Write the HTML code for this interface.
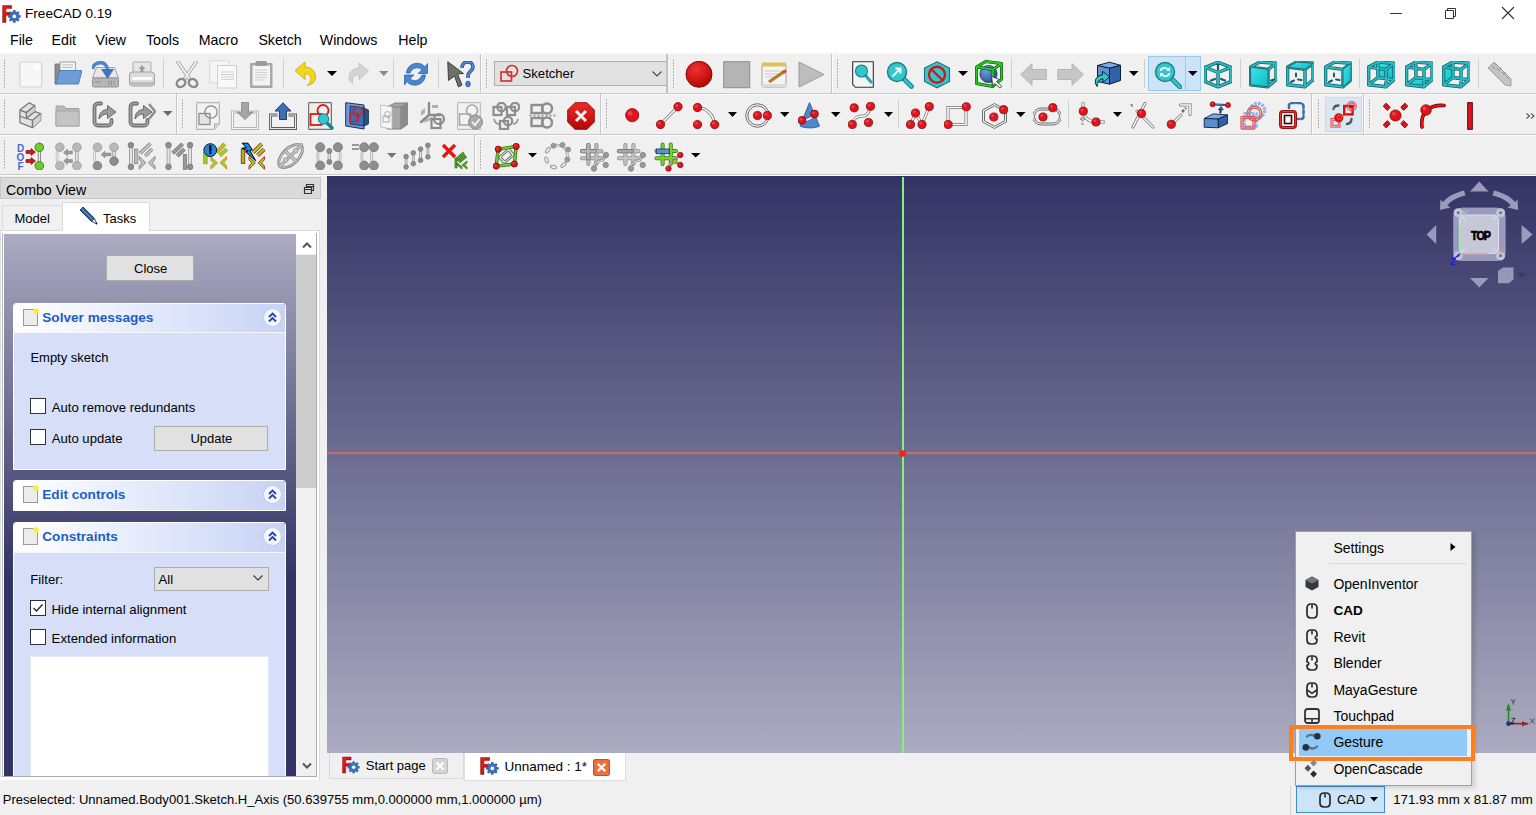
<!DOCTYPE html><html><head><meta charset="utf-8"><style>
html,body{margin:0;padding:0;}
body{width:1536px;height:815px;position:relative;overflow:hidden;background:#f0f0f0;font-family:"Liberation Sans",sans-serif;}
div,span,svg{position:absolute;box-sizing:border-box;}
.t{white-space:nowrap;line-height:1;}
</style></head><body>
<div style="left:0px;top:0px;width:1536px;height:53px;background:#fff"></div>
<div style="left:0px;top:53px;width:1536px;height:2px;background:linear-gradient(#f7f7f7,#f0f0f0)"></div>
<svg style="left:2px;top:5px;width:19px;height:18px" viewBox="0 0 19 18"><defs><linearGradient id="lgF" x1="0" y1="0" x2="1" y2="1"><stop offset="0" stop-color="#f02020"/><stop offset="1" stop-color="#b00808"/></linearGradient></defs><path d="M0.6 0.6H9.6V3.6H3.9V7.3H8.2V10.3H3.9V17.4H0.6Z" fill="url(#lgF)" stroke="#7a0a0e" stroke-width="0.5"/><g transform="translate(12.3,11.4)"><rect x="-1.3" y="-6.4" width="2.6" height="3.2" fill="#3f72bf" transform="rotate(0)"/><rect x="-1.3" y="-6.4" width="2.6" height="3.2" fill="#3f72bf" transform="rotate(45)"/><rect x="-1.3" y="-6.4" width="2.6" height="3.2" fill="#3f72bf" transform="rotate(90)"/><rect x="-1.3" y="-6.4" width="2.6" height="3.2" fill="#3f72bf" transform="rotate(135)"/><rect x="-1.3" y="-6.4" width="2.6" height="3.2" fill="#3f72bf" transform="rotate(180)"/><rect x="-1.3" y="-6.4" width="2.6" height="3.2" fill="#3f72bf" transform="rotate(225)"/><rect x="-1.3" y="-6.4" width="2.6" height="3.2" fill="#3f72bf" transform="rotate(270)"/><rect x="-1.3" y="-6.4" width="2.6" height="3.2" fill="#3f72bf" transform="rotate(315)"/><circle r="4.6" fill="#3f72bf" stroke="#2a4f8a" stroke-width="0.5"/><circle r="1.8" fill="#fff"/></g></svg>
<span class="t" style="left:25px;top:6.50px;font-size:13.6px;color:#000;font-weight:normal;">FreeCAD 0.19</span>
<div style="left:1390px;top:13px;width:12px;height:1px;background:#333"></div>
<svg style="left:1444px;top:6px;width:15px;height:14px" viewBox="0 0 15 14"><path d="M1.5 4.5h8v8h-8z M3.5 4.5v-2h8v8h-2" fill="none" stroke="#333" stroke-width="1"/></svg>
<svg style="left:1501px;top:6px;width:15px;height:14px" viewBox="0 0 15 14"><path d="M1 1L13 13M13 1L1 13" stroke="#333" stroke-width="1.1"/></svg>
<span class="t" style="left:10px;top:33.29px;font-size:14.2px;color:#000;font-weight:normal;">File</span>
<span class="t" style="left:51.6px;top:33.29px;font-size:14.2px;color:#000;font-weight:normal;">Edit</span>
<span class="t" style="left:95.6px;top:33.29px;font-size:14.2px;color:#000;font-weight:normal;">View</span>
<span class="t" style="left:146px;top:33.29px;font-size:14.2px;color:#000;font-weight:normal;">Tools</span>
<span class="t" style="left:198.8px;top:33.29px;font-size:14.2px;color:#000;font-weight:normal;">Macro</span>
<span class="t" style="left:258.4px;top:33.29px;font-size:14.2px;color:#000;font-weight:normal;">Sketch</span>
<span class="t" style="left:319.8px;top:33.29px;font-size:14.2px;color:#000;font-weight:normal;">Windows</span>
<span class="t" style="left:398.3px;top:33.29px;font-size:14.2px;color:#000;font-weight:normal;">Help</span>
<div style="left:0px;top:93px;width:1536px;height:1px;background:#cacaca"></div>
<div style="left:0px;top:94px;width:1536px;height:1px;background:#fbfbfb"></div>
<div style="left:0px;top:134px;width:1536px;height:1px;background:#cacaca"></div>
<div style="left:0px;top:135px;width:1536px;height:1px;background:#fbfbfb"></div>
<div style="left:0px;top:174px;width:1536px;height:1px;background:#cacaca"></div>
<div style="left:0px;top:175px;width:1536px;height:1px;background:#fbfbfb"></div>
<div style="left:4px;top:59px;width:1px;height:30px;background:repeating-linear-gradient(#b0b0b0 0 2px,transparent 2px 3px)"></div>
<div style="left:5px;top:60px;width:1px;height:30px;background:repeating-linear-gradient(#fafafa 0 1px,transparent 1px 3px)"></div>
<div style="left:4px;top:99px;width:1px;height:30px;background:repeating-linear-gradient(#b0b0b0 0 2px,transparent 2px 3px)"></div>
<div style="left:5px;top:100px;width:1px;height:30px;background:repeating-linear-gradient(#fafafa 0 1px,transparent 1px 3px)"></div>
<div style="left:4px;top:140px;width:1px;height:30px;background:repeating-linear-gradient(#b0b0b0 0 2px,transparent 2px 3px)"></div>
<div style="left:5px;top:141px;width:1px;height:30px;background:repeating-linear-gradient(#fafafa 0 1px,transparent 1px 3px)"></div>
<svg style="left:19px;top:61px;width:28px;height:28px" viewBox="0 0 28 28"><rect x="0.8" y="1" width="22" height="25" rx="2" fill="#f7f7f7" stroke="#d2d2d2" stroke-width="1.2"/><circle cx="18" cy="6" r="2.5" fill="#fff"/></svg>
<svg style="left:53.5px;top:61px;width:28px;height:28px" viewBox="0 0 28 28"><path d="M1 3H7V22L3 23H1Z" fill="#8c8c8c" stroke="#6e6e6e" stroke-width="0.8"/><path d="M6 1H21.5V10H6Z" fill="#f4f4f4" stroke="#8a8a8a" stroke-width="0.8"/><path d="M8 4H19M8 6.5H19" stroke="#bdbdbd" stroke-width="1"/><path d="M5.5 9.5H28L24.5 23H1.5Z" fill="#6d9cd8" stroke="#4a78b8" stroke-width="0.9"/></svg>
<svg style="left:91.5px;top:61px;width:28px;height:28px" viewBox="0 0 28 28"><path d="M4.5 6.5H22.5L26.5 17H0.5Z" fill="#e8e8e8" stroke="#9a9a9a" stroke-width="0.9"/><rect x="0.5" y="17" width="26" height="9" rx="1.5" fill="#b6b6b6" stroke="#8a8a8a" stroke-width="0.9"/><path d="M3 21H9M17 19.5V24M19.5 19.5V24M22 19.5V24" stroke="#8a8a8a" stroke-width="0.9"/><path d="M0.5 8C2 0 14 -1 15.5 8" fill="none" stroke="#4d84cc" stroke-width="3.6"/><path d="M9 8H22L15.5 18Z" fill="#3f74c0"/></svg>
<svg style="left:129px;top:61px;width:28px;height:28px" viewBox="0 0 28 28"><rect x="4" y="1" width="18" height="13" rx="1" fill="#e6e6e6" stroke="#a6a6a6" stroke-width="0.9"/><path d="M13 4L9.5 8H11.5V12H14.5V8H16.5Z" fill="#9c9c9c"/><rect x="0.5" y="11" width="25" height="14" rx="3" fill="#dcdcdc" stroke="#9a9a9a" stroke-width="0.9"/><rect x="3" y="16" width="20" height="3" fill="#fbfbfb"/><rect x="0.5" y="21" width="25" height="4" rx="1" fill="#bcbcbc"/></svg>
<div style="left:163px;top:59px;width:1px;height:29px;background:#cfcfcf"></div>
<svg style="left:174.5px;top:60.5px;width:28px;height:28px" viewBox="0 0 28 28"><path d="M3 1L14.5 18M21 1L9.5 18" stroke="#9a9a9a" stroke-width="3.4" stroke-linecap="round"/><path d="M3 1L14.5 18M21 1L9.5 18" stroke="#f2f2f2" stroke-width="2" stroke-linecap="round"/><ellipse cx="6" cy="22" rx="4.5" ry="3.8" transform="rotate(-40 6 22)" fill="none" stroke="#8a8a8a" stroke-width="2.4"/><ellipse cx="18" cy="22" rx="4.5" ry="3.8" transform="rotate(40 18 22)" fill="none" stroke="#8a8a8a" stroke-width="2.4"/></svg>
<svg style="left:209px;top:60px;width:28px;height:29px" viewBox="0 0 28 29"><rect x="0.8" y="0.8" width="19" height="22" fill="#f6f6f6" stroke="#d8d8d8" stroke-width="1"/><path d="M8.5 5.5H27.5V28H8.5Z" fill="#f8f8f8" stroke="#cfcfcf" stroke-width="1"/><path d="M12 12H25M12 14.5H25M12 17H25M12 19.5H25" stroke="#d0d0d0" stroke-width="1"/></svg>
<svg style="left:249px;top:60px;width:28px;height:28px" viewBox="0 0 28 28"><rect x="1" y="3" width="22.5" height="25" rx="1" fill="#a9a9a9"/><rect x="3.5" y="5.5" width="17.5" height="20" fill="#f4f4f4"/><rect x="6.5" y="1" width="11.5" height="5" rx="1.5" fill="#9c9c9c"/><path d="M6 10H18M6 12.5H18M6 15H18M6 17.5H18M6 20H15" stroke="#cfcfcf" stroke-width="1"/></svg>
<div style="left:282.5px;top:59px;width:1px;height:29px;background:#cfcfcf"></div>
<svg style="left:293.5px;top:61px;width:28px;height:28px" viewBox="0 0 28 28"><path d="M1 9.5L11 1V6C17 6 21.5 10 21.5 16C21.5 20 19 23.5 13 24.5C16.5 22 17 19 16.5 16.5C16 13.5 13.5 12.5 11 12.5V18.5Z" fill="#f1d81c" stroke="#c9ad00" stroke-width="0.9"/></svg>
<svg style="left:326.5px;top:71px;width:10px;height:5px" viewBox="0 0 10 5"><path d="M0 0H10L5.0 5z" fill="#000"/></svg>
<svg style="left:347.5px;top:61.5px;width:28px;height:28px" viewBox="0 0 28 28"><path d="M20.5 9L11 1V6C5 6 1 10 1 15.5C1 18 2 20 5 21.5C3.8 19.5 4.2 16.5 6 14.5C7.5 13 9 12.5 11 12.5V17.5Z" fill="#d4d4d4" stroke="#c4c4c4" stroke-width="0.9"/></svg>
<svg style="left:378.5px;top:71px;width:9.5px;height:5px" viewBox="0 0 9.5 5"><path d="M0 0H9.5L4.75 5z" fill="#8a8a8a"/></svg>
<div style="left:392.5px;top:59px;width:1px;height:29px;background:#cfcfcf"></div>
<svg style="left:404px;top:61px;width:28px;height:28px" viewBox="0 0 28 28"><path d="M2.5 12C3 5 9 1.5 15 2.5C18 3 20 4.5 21 6L23.5 2.5V12.5H14L18 9C15 5.5 8.5 6 6 12Z" fill="#4a86cf" stroke="#2f66b0" stroke-width="0.8"/><path d="M21.5 14C21 21 15 25 9 24C6 23.5 4 22 3 20.5L0.5 24V14H10L6 17.5C9 21 15.5 20.5 18 14Z" fill="#4a86cf" stroke="#2f66b0" stroke-width="0.8"/></svg>
<div style="left:437.5px;top:59px;width:1px;height:29px;background:#cfcfcf"></div>
<svg style="left:447px;top:61px;width:28px;height:28px" viewBox="0 0 28 28"><path d="M0.8 0.8L16.5 12.5L10.5 13L15 24L11.5 26L7.5 15L1.5 19.5Z" fill="#6f706c" stroke="#3e3f3c" stroke-width="1"/><path d="M15 7C15 3 17.5 1 20.5 1C24 1 26 3.5 26 6C26 9.5 21.5 10.5 21 14.5V17" fill="none" stroke="#1f4f9a" stroke-width="3.6"/><path d="M15 7C15 3 17.5 1 20.5 1C24 1 26 3.5 26 6C26 9.5 21.5 10.5 21 14.5V17" fill="none" stroke="#5a92d8" stroke-width="1.6"/><ellipse cx="21" cy="23" rx="2.2" ry="2.8" fill="#4a82cc" stroke="#1f4f9a" stroke-width="0.9"/></svg>
<div style="left:480px;top:54px;width:1px;height:39px;background:#c6c6c6"></div>
<div style="left:481px;top:54px;width:1px;height:39px;background:#fdfdfd"></div>
<div style="left:486px;top:59px;width:1px;height:30px;background:repeating-linear-gradient(#b0b0b0 0 2px,transparent 2px 3px)"></div>
<div style="left:487px;top:60px;width:1px;height:30px;background:repeating-linear-gradient(#fafafa 0 1px,transparent 1px 3px)"></div>
<div style="left:494px;top:61px;width:173px;height:25px;background:#e1e1e1;border:1px solid #adadad"></div>
<svg style="left:500px;top:64px;width:19px;height:19px" viewBox="0 0 19 19"><rect x="1" y="8" width="10.5" height="9" fill="none" stroke="#d42a2a" stroke-width="1.6"/><circle cx="12" cy="7" r="5.5" fill="none" stroke="#d42a2a" stroke-width="1.6"/></svg>
<span class="t" style="left:522.6px;top:67.23px;font-size:13.1px;color:#000;font-weight:normal;">Sketcher</span>
<svg style="left:651.5px;top:70.5px;width:10px;height:6px" viewBox="0 0 10 6"><path d="M0.5 0.5L5 5L9.5 0.5" fill="none" stroke="#444" stroke-width="1.1"/></svg>
<div style="left:666px;top:54px;width:2px;height:39px;background:#c0c0c0"></div>
<div style="left:668px;top:54px;width:1px;height:39px;background:#f4f4f4"></div>
<div style="left:673px;top:59px;width:1px;height:30px;background:repeating-linear-gradient(#b0b0b0 0 2px,transparent 2px 3px)"></div>
<div style="left:674px;top:60px;width:1px;height:30px;background:repeating-linear-gradient(#fafafa 0 1px,transparent 1px 3px)"></div>
<svg style="left:685px;top:61px;width:28px;height:28px" viewBox="0 0 28 28"><defs><radialGradient id="rg1" cx="0.4" cy="0.3" r="0.8"><stop offset="0" stop-color="#f23030"/><stop offset="1" stop-color="#b00000"/></radialGradient></defs><circle cx="14" cy="13.3" r="13" fill="url(#rg1)" stroke="#7a0000" stroke-width="0.9"/></svg>
<svg style="left:723px;top:61px;width:28px;height:28px" viewBox="0 0 28 28"><rect x="0.7" y="0.7" width="26" height="26" fill="#b4b4b4" stroke="#8c8c8c" stroke-width="1"/></svg>
<svg style="left:760.5px;top:61px;width:28px;height:28px" viewBox="0 0 28 28"><rect x="1" y="3" width="24" height="23" rx="1.5" fill="#f4f4f4" stroke="#9a9a9a" stroke-width="0.9"/><rect x="1" y="1.5" width="24" height="4" fill="#d8c25a"/><path d="M4 10H21M4 13H21M4 16H15" stroke="#c8c8c8" stroke-width="1"/><path d="M8 21L24 10" stroke="#b8782a" stroke-width="3.2"/><path d="M22 11.5L25 9.5" stroke="#e04040" stroke-width="3.2"/><rect x="1" y="23" width="24" height="3" fill="#dcdcdc"/></svg>
<svg style="left:797.5px;top:61px;width:28px;height:28px" viewBox="0 0 28 28"><path d="M1 1L26 13.5L1 26Z" fill="#bdbdbd" stroke="#9a9a9a" stroke-width="1"/></svg>
<div style="left:831px;top:54px;width:1px;height:39px;background:#c6c6c6"></div>
<div style="left:832px;top:54px;width:1px;height:39px;background:#fdfdfd"></div>
<div style="left:837px;top:59px;width:1px;height:30px;background:repeating-linear-gradient(#b0b0b0 0 2px,transparent 2px 3px)"></div>
<div style="left:838px;top:60px;width:1px;height:30px;background:repeating-linear-gradient(#fafafa 0 1px,transparent 1px 3px)"></div>
<svg style="left:851.5px;top:61px;width:28px;height:28px" viewBox="0 0 28 28"><path d="M0.7 0.7H21.3V26.3H3.5L0.7 23.5Z" fill="#f4f4f4" stroke="#333" stroke-width="1.1"/><path d="M14 15L19 21" stroke="#24a9b1" stroke-width="3.2" stroke-linecap="round"/><circle cx="9.5" cy="10" r="6" fill="#33c6cf" stroke="#1d7f86" stroke-width="1.1"/></svg>
<svg style="left:886px;top:61px;width:28px;height:28px" viewBox="0 0 28 28"><path d="M17 17L25.5 25.5" stroke="#1d7f86" stroke-width="4.6" stroke-linecap="round"/><path d="M17 17L25.5 25.5" stroke="#33c6cf" stroke-width="2.6" stroke-linecap="round"/><circle cx="11" cy="11" r="9.5" fill="#33c6cf" stroke="#1d7f86" stroke-width="1.4"/><path d="M6.5 15.5L14.5 7.5M9.5 7.5H14.5V12.5" fill="none" stroke="#fff" stroke-width="1.8"/></svg>
<svg style="left:922.5px;top:61px;width:28px;height:28px" viewBox="0 0 28 28"><path d="M14 0.8L26.5 7V20.5L14 26.8L1.5 20.5V7Z" fill="#33c6cf" stroke="#1d6f75" stroke-width="1.1"/><circle cx="14" cy="13.8" r="8" fill="none" stroke="#d01818" stroke-width="2.4"/><path d="M8.5 8.5L19.5 19" stroke="#d01818" stroke-width="2.4"/></svg>
<svg style="left:958px;top:71px;width:10px;height:5px" viewBox="0 0 10 5"><path d="M0 0H10L5.0 5z" fill="#000"/></svg>
<svg style="left:972px;top:57px;width:34px;height:34px" viewBox="0 0 34 34"><defs><radialGradient id="rg2" cx="0.35" cy="0.3" r="0.8"><stop offset="0" stop-color="#6f9ee0"/><stop offset="1" stop-color="#1f4e98"/></radialGradient></defs><circle cx="16.5" cy="17" r="8.6" fill="url(#rg2)" stroke="#222" stroke-width="0.7"/><path d="M4.5 10L13.5 4.5L29.5 6.5L21 12.5Z M4.5 10V26.5L21 29.5V12.5 M29.5 6.5V22.5L21 29.5" fill="none" stroke="#0a3a0a" stroke-width="2.8" stroke-linejoin="round"/><path d="M4.5 10L13.5 4.5L29.5 6.5L21 12.5Z M4.5 10V26.5L21 29.5V12.5 M29.5 6.5V22.5L21 29.5" fill="none" stroke="#1ed01e" stroke-width="1.8" stroke-linejoin="round"/><path d="M19.5 19.5L27.5 22.5L24.5 24.5L30 29.5L28 31L22.5 26.5L21 29.5Z" fill="#f4f4f4" stroke="#333" stroke-width="0.8" stroke-linejoin="round"/></svg>
<div style="left:1010.5px;top:59px;width:1px;height:29px;background:#cfcfcf"></div>
<svg style="left:1020px;top:63px;width:28px;height:24px" viewBox="0 0 28 24"><path d="M0.8 11.5L12 0.8V6.5H26.3V16.5H12V22.2Z" fill="#c6c6c6" stroke="#b0b0b0" stroke-width="0.9"/></svg>
<svg style="left:1057px;top:63px;width:28px;height:24px" viewBox="0 0 28 24"><path d="M26.3 11.5L15 0.8V6.5H0.8V16.5H15V22.2Z" fill="#c6c6c6" stroke="#b0b0b0" stroke-width="0.9"/></svg>
<svg style="left:1090px;top:57px;width:34px;height:34px" viewBox="0 0 34 34"><path d="M7.5 8.5L19.5 5.2L30.5 8.3L19.5 11.3Z" fill="#7aaae0" stroke="#101c33" stroke-width="1" stroke-linejoin="round"/><path d="M7.5 8.5L19.5 11.3V27.2L7.5 24.5Z" fill="#5d93d4" stroke="#101c33" stroke-width="1" stroke-linejoin="round"/><path d="M19.5 11.3L30.5 8.3V23.5L19.5 27.2Z" fill="#2e62aa" stroke="#101c33" stroke-width="1" stroke-linejoin="round"/><path d="M7.2 29.5C3.5 25 5 19 12.5 17.8V14.3L19.5 19.8L13 25.5V21.8C9.5 22 7.5 24.5 7.2 29.5Z" fill="#2ac8c8" stroke="#0a2a2a" stroke-width="1" stroke-linejoin="round"/></svg>
<svg style="left:1129px;top:71px;width:9.5px;height:5px" viewBox="0 0 9.5 5"><path d="M0 0H9.5L4.75 5z" fill="#000"/></svg>
<div style="left:1143.5px;top:59px;width:1px;height:29px;background:#cfcfcf"></div>
<div style="left:1148px;top:56px;width:53px;height:35px;background:#cce4f7;border:1px solid #99c9ef"></div>
<div style="left:1185px;top:57px;width:1px;height:33px;background:#99c9ef"></div>
<svg style="left:1153.5px;top:61px;width:28px;height:28px" viewBox="0 0 28 28"><path d="M17.5 17.5L26 26" stroke="#1d7f86" stroke-width="4.6" stroke-linecap="round"/><path d="M17.5 17.5L26 26" stroke="#33c6cf" stroke-width="2.6" stroke-linecap="round"/><circle cx="11" cy="11" r="9.5" fill="#33c6cf" stroke="#1d7f86" stroke-width="1.4"/><path d="M5.5 10C6 6 11 4.5 14.5 7.5L16 6V10H12L13.5 8.8C11 7 8 8 7.5 10Z M16.5 12C16 16 11 17.5 7.5 14.5L6 16V12H10L8.5 13.2C11 15 14 14 14.5 12Z" fill="#fff"/></svg>
<svg style="left:1188px;top:71px;width:9.5px;height:5px" viewBox="0 0 9.5 5"><path d="M0 0H9.5L4.75 5z" fill="#000"/></svg>
<svg style="left:1204px;top:61px;width:28px;height:28px" viewBox="0 0 28 28"><path d="M14 1.2L26.9 6.3L26.9 20.6L14 25.9L1.3 20.6L1.3 6.3ZM1.3 6.3L14 11.5L26.9 6.3M14 11.5V25.9" fill="none" stroke="#1a5f64" stroke-width="3.4" stroke-linejoin="round" stroke-linecap="round"/><path d="M14 1.2L26.9 6.3L26.9 20.6L14 25.9L1.3 20.6L1.3 6.3ZM1.3 6.3L14 11.5L26.9 6.3M14 11.5V25.9" fill="none" stroke="#26bcc4" stroke-width="1.9" stroke-linejoin="round" stroke-linecap="round"/><path d="M14 4.5V8.5M7 19.5L11 18M17 18L21 19.5" stroke="#1a5f64" stroke-width="2.2" stroke-linecap="round"/></svg>
<div style="left:1240px;top:59px;width:1px;height:29px;background:#cfcfcf"></div>
<svg style="left:1248.5px;top:61px;width:28px;height:28px" viewBox="0 0 28 28"><defs><linearGradient id="tg_front" x1="0" y1="0" x2="1" y2="1"><stop offset="0" stop-color="#3ae6ec"/><stop offset="1" stop-color="#12b8c2"/></linearGradient></defs><path d="M1.6 6.1L19 8.4L19 25.8L1.6 23.7ZM1.6 6.1L10.9 1.0L27.0 2.3L19 8.4ZM19 8.4L27.0 2.3L27.0 18.8L19 25.8Z" fill="none" stroke="#1a5f64" stroke-width="3.4" stroke-linejoin="round" stroke-linecap="round"/><path d="M1.6 6.1L19 8.4L19 25.8L1.6 23.7ZM1.6 6.1L10.9 1.0L27.0 2.3L19 8.4ZM19 8.4L27.0 2.3L27.0 18.8L19 25.8Z" fill="none" stroke="#26bcc4" stroke-width="1.9" stroke-linejoin="round" stroke-linecap="round"/><path d="M1.6 6.1L19 8.4L19 25.8L1.6 23.7Z" fill="url(#tg_front)" stroke="#1a5f64" stroke-width="0.9" stroke-linejoin="round"/><path d="M22 19.5L25 18.5" stroke="#1a5f64" stroke-width="2" stroke-linecap="round"/></svg>
<svg style="left:1285.5px;top:61px;width:28px;height:28px" viewBox="0 0 28 28"><defs><linearGradient id="tg_top" x1="0" y1="0" x2="1" y2="1"><stop offset="0" stop-color="#3ae6ec"/><stop offset="1" stop-color="#12b8c2"/></linearGradient></defs><path d="M1.6 6.1L19 8.4L19 25.8L1.6 23.7ZM1.6 6.1L10.9 1.0L27.0 2.3L19 8.4ZM19 8.4L27.0 2.3L27.0 18.8L19 25.8Z" fill="none" stroke="#1a5f64" stroke-width="3.4" stroke-linejoin="round" stroke-linecap="round"/><path d="M1.6 6.1L19 8.4L19 25.8L1.6 23.7ZM1.6 6.1L10.9 1.0L27.0 2.3L19 8.4ZM19 8.4L27.0 2.3L27.0 18.8L19 25.8Z" fill="none" stroke="#26bcc4" stroke-width="1.9" stroke-linejoin="round" stroke-linecap="round"/><path d="M10.9 1.0L27.0 2.3L19 8.4L1.6 6.1Z" fill="url(#tg_top)" stroke="#1a5f64" stroke-width="0.9" stroke-linejoin="round"/><path d="M10 12.5V15.5M5 21L8 19.5M12 18.5L15.5 19" stroke="#1a5f64" stroke-width="2" stroke-linecap="round"/></svg>
<svg style="left:1323.5px;top:61px;width:28px;height:28px" viewBox="0 0 28 28"><defs><linearGradient id="tg_right" x1="0" y1="0" x2="1" y2="1"><stop offset="0" stop-color="#3ae6ec"/><stop offset="1" stop-color="#12b8c2"/></linearGradient></defs><path d="M1.6 6.1L19 8.4L19 25.8L1.6 23.7ZM1.6 6.1L10.9 1.0L27.0 2.3L19 8.4ZM19 8.4L27.0 2.3L27.0 18.8L19 25.8Z" fill="none" stroke="#1a5f64" stroke-width="3.4" stroke-linejoin="round" stroke-linecap="round"/><path d="M1.6 6.1L19 8.4L19 25.8L1.6 23.7ZM1.6 6.1L10.9 1.0L27.0 2.3L19 8.4ZM19 8.4L27.0 2.3L27.0 18.8L19 25.8Z" fill="none" stroke="#26bcc4" stroke-width="1.9" stroke-linejoin="round" stroke-linecap="round"/><path d="M19 8.4L27.0 2.3L27.0 18.8L19 25.8Z" fill="url(#tg_right)" stroke="#1a5f64" stroke-width="0.9" stroke-linejoin="round"/><path d="M10 12.5V15.5M5 21L8 19.5M12 18.5L15.5 19" stroke="#1a5f64" stroke-width="2" stroke-linecap="round"/></svg>
<div style="left:1358.5px;top:59px;width:1px;height:29px;background:#cfcfcf"></div>
<svg style="left:1367px;top:61px;width:28px;height:28px" viewBox="0 0 28 28"><defs><linearGradient id="tg_rear" x1="0" y1="0" x2="1" y2="1"><stop offset="0" stop-color="#3ae6ec"/><stop offset="1" stop-color="#12b8c2"/></linearGradient></defs><path d="M10.9 1.0L27.0 2.3L27.0 18.8L10.9 16.5Z" fill="url(#tg_rear)"/><path d="M1.6 6.1L19 8.4L19 25.8L1.6 23.7ZM10.9 1.0L27.0 2.3L27.0 18.8L10.9 16.5ZM1.6 6.1L10.9 1.0M19 8.4L27.0 2.3M19 25.8L27.0 18.8M1.6 23.7L10.9 16.5" fill="none" stroke="#1a5f64" stroke-width="3.4" stroke-linejoin="round" stroke-linecap="round"/><path d="M1.6 6.1L19 8.4L19 25.8L1.6 23.7ZM10.9 1.0L27.0 2.3L27.0 18.8L10.9 16.5ZM1.6 6.1L10.9 1.0M19 8.4L27.0 2.3M19 25.8L27.0 18.8M1.6 23.7L10.9 16.5" fill="none" stroke="#26bcc4" stroke-width="1.9" stroke-linejoin="round" stroke-linecap="round"/></svg>
<svg style="left:1404.5px;top:61px;width:28px;height:28px" viewBox="0 0 28 28"><defs><linearGradient id="tg_bottom" x1="0" y1="0" x2="1" y2="1"><stop offset="0" stop-color="#3ae6ec"/><stop offset="1" stop-color="#12b8c2"/></linearGradient></defs><path d="M1.6 23.7L19 25.8L27.0 18.8L10.9 16.5Z" fill="url(#tg_bottom)"/><path d="M1.6 6.1L19 8.4L19 25.8L1.6 23.7ZM10.9 1.0L27.0 2.3L27.0 18.8L10.9 16.5ZM1.6 6.1L10.9 1.0M19 8.4L27.0 2.3M19 25.8L27.0 18.8M1.6 23.7L10.9 16.5" fill="none" stroke="#1a5f64" stroke-width="3.4" stroke-linejoin="round" stroke-linecap="round"/><path d="M1.6 6.1L19 8.4L19 25.8L1.6 23.7ZM10.9 1.0L27.0 2.3L27.0 18.8L10.9 16.5ZM1.6 6.1L10.9 1.0M19 8.4L27.0 2.3M19 25.8L27.0 18.8M1.6 23.7L10.9 16.5" fill="none" stroke="#26bcc4" stroke-width="1.9" stroke-linejoin="round" stroke-linecap="round"/></svg>
<svg style="left:1441.5px;top:61px;width:28px;height:28px" viewBox="0 0 28 28"><defs><linearGradient id="tg_left" x1="0" y1="0" x2="1" y2="1"><stop offset="0" stop-color="#3ae6ec"/><stop offset="1" stop-color="#12b8c2"/></linearGradient></defs><path d="M10.9 1.0L1.6 6.1L1.6 23.7L10.9 16.5Z" fill="url(#tg_left)"/><path d="M1.6 6.1L19 8.4L19 25.8L1.6 23.7ZM10.9 1.0L27.0 2.3L27.0 18.8L10.9 16.5ZM1.6 6.1L10.9 1.0M19 8.4L27.0 2.3M19 25.8L27.0 18.8M1.6 23.7L10.9 16.5" fill="none" stroke="#1a5f64" stroke-width="3.4" stroke-linejoin="round" stroke-linecap="round"/><path d="M1.6 6.1L19 8.4L19 25.8L1.6 23.7ZM10.9 1.0L27.0 2.3L27.0 18.8L10.9 16.5ZM1.6 6.1L10.9 1.0M19 8.4L27.0 2.3M19 25.8L27.0 18.8M1.6 23.7L10.9 16.5" fill="none" stroke="#26bcc4" stroke-width="1.9" stroke-linejoin="round" stroke-linecap="round"/></svg>
<div style="left:1477.5px;top:59px;width:1px;height:29px;background:#cfcfcf"></div>
<svg style="left:1487px;top:61px;width:28px;height:28px" viewBox="0 0 28 28"><path d="M1 7L7 1L24 18V25L18 24Z" fill="#c4c4c4" stroke="#9a9a9a" stroke-width="0.9"/><path d="M5 5L8 8M8 2.5L10 4.5M10 7L13 10M12.5 6L14.5 8M15 11L18 14M17 10.5L19 12.5M19.5 15.5L22 18" stroke="#8a8a8a" stroke-width="1"/></svg>
<svg style="left:16px;top:99px;width:30px;height:32px" viewBox="0 0 30 32"><path d="M3.9 11L13 3.9L18.8 6.7V12.6L24.7 14.5V21.2L16.5 28.7L3.9 23.6Z" fill="#e2e2e2" stroke="#7a7a7a" stroke-width="1.3" stroke-linejoin="round"/><path d="M3.9 11L10.4 13.5L18.8 6.7M10.4 13.5V19.2L18.8 12.6M3.9 17.3L16.5 21.4L24.7 14.5M16.5 21.4V28.7" fill="none" stroke="#7a7a7a" stroke-width="1.2"/><path d="M10.4 13.5L18.8 6.7V12.6L10.4 19.2Z M16.5 21.4L24.7 14.5V21.2L16.5 28.7Z" fill="#d2d2d2"/><path d="M3.9 11L10.4 13.5L18.8 6.7M10.4 13.5V19.2L18.8 12.6M16.5 21.4L24.7 14.5M16.5 21.4V28.7" fill="none" stroke="#7a7a7a" stroke-width="1.2"/></svg>
<svg style="left:54.5px;top:101.5px;width:26px;height:26px" viewBox="0 0 26 26"><path d="M1 4H9L11 6.5H24V24H1Z" fill="#b8b8b8" stroke="#9c9c9c" stroke-width="0.9"/><path d="M1 9H24V24H1Z" fill="#c4c4c4" stroke="#a4a4a4" stroke-width="0.9"/></svg>
<svg style="left:92px;top:101px;width:26px;height:27px" viewBox="0 0 26 27"><path d="M9 2.5H6C4 2.5 2.5 4 2.5 6V21C2.5 23 4 24.5 6 24.5H16C18 24.5 19.5 23 19.5 21V19" fill="none" stroke="#6a6a6a" stroke-width="3.8" stroke-linecap="round"/><path d="M9 2.5H6C4 2.5 2.5 4 2.5 6V21C2.5 23 4 24.5 6 24.5H16C18 24.5 19.5 23 19.5 21V19" fill="none" stroke="#a4a4a4" stroke-width="1.6" stroke-linecap="round"/><path d="M7 18C7 12 10.5 8.5 15.5 8.5V4.5L24 11L15.5 17.5V13C11.5 13 9 15 7 18Z" fill="#9a9a9a" stroke="#6a6a6a" stroke-width="1"/></svg>
<svg style="left:128px;top:101px;width:28px;height:28px" viewBox="0 0 28 28"><path d="M9 2.5H6C4 2.5 2.5 4 2.5 6V21C2.5 23 4 24.5 6 24.5H16C18 24.5 19.5 23 19.5 21V19" fill="none" stroke="#6a6a6a" stroke-width="3.8" stroke-linecap="round"/><path d="M9 2.5H6C4 2.5 2.5 4 2.5 6V21C2.5 23 4 24.5 6 24.5H16C18 24.5 19.5 23 19.5 21V19" fill="none" stroke="#a4a4a4" stroke-width="1.6" stroke-linecap="round"/><path d="M7 18C7 12 10.5 8.5 15.5 8.5V4.5L24 11L15.5 17.5V13C11.5 13 9 15 7 18Z" fill="#9a9a9a" stroke="#6a6a6a" stroke-width="1"/><path d="M21 3L27 10.5L21 18" fill="none" stroke="#8a8a8a" stroke-width="2.4"/></svg>
<svg style="left:163px;top:111px;width:9.5px;height:5px" viewBox="0 0 9.5 5"><path d="M0 0H9.5L4.75 5z" fill="#6a6a6a"/></svg>
<div style="left:176px;top:94px;width:1px;height:40px;background:#c6c6c6"></div>
<div style="left:177px;top:94px;width:1px;height:40px;background:#fdfdfd"></div>
<div style="left:182px;top:99px;width:1px;height:30px;background:repeating-linear-gradient(#b0b0b0 0 2px,transparent 2px 3px)"></div>
<div style="left:183px;top:100px;width:1px;height:30px;background:repeating-linear-gradient(#fafafa 0 1px,transparent 1px 3px)"></div>
<svg style="left:196px;top:101.5px;width:28px;height:28px" viewBox="0 0 28 28"><path d="M0.7 0.7H23.3V22L18.5 27.3H0.7Z" fill="#f2f2f2" stroke="#a9a9a9" stroke-width="1"/><rect x="3" y="11.5" width="11" height="11" fill="#e4e4e4" stroke="#8a8a8a" stroke-width="1.3"/><circle cx="15" cy="10" r="6.2" fill="none" stroke="#8a8a8a" stroke-width="1.3"/><path d="M18.5 27.3V22H23.3" fill="#d8d8d8" stroke="#a9a9a9" stroke-width="1"/></svg>
<svg style="left:231px;top:101.5px;width:28px;height:28px" viewBox="0 0 28 28"><path d="M8.5 10H1.5V26.5H26.5V10H19.5" fill="none" stroke="#b4b4b4" stroke-width="3"/><path d="M8.5 10H1.5V26.5H26.5V10H19.5" fill="none" stroke="#f6f6f6" stroke-width="1.2"/><path d="M10.5 0.5H17.5V10H22L14 17.5L6 10H10.5Z" fill="#a4a4a4" stroke="#8a8a8a" stroke-width="0.9"/></svg>
<svg style="left:269px;top:101.5px;width:28px;height:28px" viewBox="0 0 28 28"><path d="M8.5 13H1.5V26.5H26.5V13H19.5" fill="none" stroke="#5a5a5a" stroke-width="3"/><path d="M8.5 13H1.5V26.5H26.5V13H19.5" fill="none" stroke="#e8e8e8" stroke-width="1.2"/><path d="M10.5 17.5H17.5V9H22L14 0.8L6 9H10.5Z" fill="#3a6fb8" stroke="#1c2f52" stroke-width="0.9"/></svg>
<svg style="left:307.5px;top:101.5px;width:28px;height:28px" viewBox="0 0 28 28"><path d="M0.7 0.7H23.3V27.3H0.7Z" fill="#eeeeee" stroke="#555" stroke-width="1"/><rect x="2.5" y="12" width="11" height="11" fill="none" stroke="#e01818" stroke-width="1.8"/><circle cx="15" cy="8.5" r="5.5" fill="none" stroke="#e01818" stroke-width="1.8"/><path d="M18 20L24 26" stroke="#1d7f86" stroke-width="3.4" stroke-linecap="round"/><circle cx="15.5" cy="17" r="5.2" fill="#33c6cf" stroke="#1d7f86" stroke-width="1"/></svg>
<svg style="left:345px;top:101.5px;width:28px;height:28px" viewBox="0 0 28 28"><path d="M0.7 0.7L19 3V27L0.7 24Z" fill="#6d9ad6" stroke="#1c2f52" stroke-width="1"/><path d="M5 4L19 6V24L5 22Z" fill="#3a6fb8" stroke="#1c2f52" stroke-width="0.8"/><path d="M19 6L23.5 8V22L19 24Z" fill="#2a4f8a" stroke="#1c2f52" stroke-width="0.8"/><rect x="5" y="11.5" width="8" height="8" fill="none" stroke="#e01818" stroke-width="1.6"/><circle cx="13" cy="9.5" r="4.5" fill="none" stroke="#e01818" stroke-width="1.6"/></svg>
<svg style="left:380px;top:101.5px;width:28px;height:28px" viewBox="0 0 28 28"><path d="M7 5L15 1H28V22L21 27H7Z" fill="#a6a6a6" stroke="#777" stroke-width="0.9"/><path d="M21 5V27 M7 5H21L28 1" fill="none" stroke="#777" stroke-width="0.9"/><path d="M21 5L28 1V22L21 27Z" fill="#8a8a8a"/><path d="M0.7 3L12 5V27L0.7 25Z" fill="#f6f6f6" stroke="#bdbdbd" stroke-width="0.9"/><rect x="3" y="14" width="6" height="6" fill="none" stroke="#aaa" stroke-width="1"/><circle cx="7.5" cy="12.5" r="3" fill="none" stroke="#aaa" stroke-width="1"/></svg>
<svg style="left:418.5px;top:101.5px;width:28px;height:28px" viewBox="0 0 28 28"><path d="M10 1V13M10 13L2 20M10 13H21" stroke="#8a8a8a" stroke-width="2.4" stroke-linecap="round"/><path d="M2 9L6 6V11L2 14Z M13 3H19V6H13Z M7 17L13 15L10 19L4 21Z" fill="#b0b0b0"/><rect x="12.5" y="17" width="9" height="9" fill="none" stroke="#8a8a8a" stroke-width="2.2"/><circle cx="20" cy="17" r="5" fill="none" stroke="#8a8a8a" stroke-width="2.2"/></svg>
<svg style="left:456.5px;top:101.5px;width:28px;height:28px" viewBox="0 0 28 28"><path d="M0.7 0.7H23.3V27.3H0.7Z" fill="#f2f2f2" stroke="#b0b0b0" stroke-width="1"/><rect x="2.5" y="12" width="11" height="11" fill="none" stroke="#a8a8a8" stroke-width="1.6"/><circle cx="15" cy="8.5" r="5.5" fill="none" stroke="#a8a8a8" stroke-width="1.6"/><circle cx="18.5" cy="20" r="7" fill="#a8a8a8" stroke="#8a8a8a" stroke-width="0.9"/><path d="M15 20L18 23L22.5 17" fill="none" stroke="#eee" stroke-width="2"/></svg>
<svg style="left:492px;top:101.5px;width:28px;height:28px" viewBox="0 0 28 28"><rect x="1.5" y="5" width="8" height="8" fill="none" stroke="#8e8e8e" stroke-width="2.2"/><circle cx="9.5" cy="5" r="4.2" fill="none" stroke="#8e8e8e" stroke-width="2.2"/><rect x="15" y="5" width="8" height="8" fill="none" stroke="#8e8e8e" stroke-width="2.2"/><circle cx="23" cy="5" r="4.2" fill="none" stroke="#8e8e8e" stroke-width="2.2"/><rect x="8" y="19" width="8" height="8" fill="none" stroke="#8e8e8e" stroke-width="2.2"/><circle cx="16" cy="19" r="4.2" fill="none" stroke="#8e8e8e" stroke-width="2.2"/><path d="M2 17C3 21 5 22 7 22M26 17C25 21 23 22 21 22" fill="none" stroke="#9a9a9a" stroke-width="1.8"/></svg>
<svg style="left:529px;top:101.5px;width:28px;height:28px" viewBox="0 0 28 28"><rect x="2.5" y="3" width="11" height="8" fill="none" stroke="#8e8e8e" stroke-width="2.4"/><circle cx="18" cy="6.5" r="5" fill="none" stroke="#8e8e8e" stroke-width="2.4"/><rect x="2.5" y="16" width="11" height="8" fill="none" stroke="#8e8e8e" stroke-width="2.4"/><circle cx="18" cy="20.5" r="5" fill="none" stroke="#8e8e8e" stroke-width="2.4"/><path d="M0.5 13.5H27.5" stroke="#9a9a9a" stroke-width="2" stroke-dasharray="2 2"/></svg>
<svg style="left:567px;top:101.5px;width:28px;height:28px" viewBox="0 0 28 28"><defs><linearGradient id="lg3" x1="0" y1="0" x2="0" y2="1"><stop offset="0" stop-color="#f02a2a"/><stop offset="1" stop-color="#b00808"/></linearGradient></defs><path d="M8 0.7H20L27.3 8V20L20 27.3H8L0.7 20V8Z" fill="url(#lg3)" stroke="#900" stroke-width="0.9"/><path d="M9 9L19 19M19 9L9 19" stroke="#f2f2f2" stroke-width="3"/></svg>
<div style="left:600px;top:94px;width:1px;height:40px;background:#c6c6c6"></div>
<div style="left:601px;top:94px;width:1px;height:40px;background:#fdfdfd"></div>
<div style="left:606px;top:99px;width:1px;height:30px;background:repeating-linear-gradient(#b0b0b0 0 2px,transparent 2px 3px)"></div>
<div style="left:607px;top:100px;width:1px;height:30px;background:repeating-linear-gradient(#fafafa 0 1px,transparent 1px 3px)"></div>
<svg style="left:624.5px;top:108px;width:15px;height:15px" viewBox="0 0 15 15"><circle cx="7.2" cy="7.2" r="6.6" fill="#e0141c" stroke="#7a0000" stroke-width="0.7"/><circle cx="5.220000000000001" cy="5.220000000000001" r="2.3099999999999996" fill="#f5606a" opacity="0.6"/></svg>
<svg style="left:655px;top:101.5px;width:28px;height:28px" viewBox="0 0 28 28"><path d="M5.5 22.5L23 4.7" stroke="#6e6e6e" stroke-width="3.0" stroke-linecap="round"/><path d="M5.5 22.5L23 4.7" stroke="#ffffff" stroke-width="1.6" stroke-linecap="round"/><circle cx="5.5" cy="22.5" r="4.2" fill="#e0141c" stroke="#7a0000" stroke-width="0.7"/><circle cx="4.24" cy="21.24" r="1.47" fill="#f5606a" opacity="0.6"/><circle cx="23" cy="4.7" r="4.2" fill="#e0141c" stroke="#7a0000" stroke-width="0.7"/><circle cx="21.74" cy="3.4400000000000004" r="1.47" fill="#f5606a" opacity="0.6"/></svg>
<svg style="left:692.5px;top:101.5px;width:28px;height:28px" viewBox="0 0 28 28"><path d="M4.5 5.5C12 5.5 21 12 21.5 22.5" fill="none" stroke="#6e6e6e" stroke-width="3.0" stroke-linecap="round"/><path d="M4.5 5.5C12 5.5 21 12 21.5 22.5" fill="none" stroke="#ffffff" stroke-width="1.6" stroke-linecap="round"/><circle cx="4.5" cy="5.5" r="4.2" fill="#e0141c" stroke="#7a0000" stroke-width="0.7"/><circle cx="3.24" cy="4.24" r="1.47" fill="#f5606a" opacity="0.6"/><circle cx="4.5" cy="22.6" r="4.2" fill="#e0141c" stroke="#7a0000" stroke-width="0.7"/><circle cx="3.24" cy="21.34" r="1.47" fill="#f5606a" opacity="0.6"/><circle cx="21.7" cy="22.6" r="4.2" fill="#e0141c" stroke="#7a0000" stroke-width="0.7"/><circle cx="20.439999999999998" cy="21.34" r="1.47" fill="#f5606a" opacity="0.6"/></svg>
<svg style="left:728px;top:111.5px;width:9px;height:5px" viewBox="0 0 9 5"><path d="M0 0H9L4.5 5z" fill="#000"/></svg>
<svg style="left:745px;top:101.5px;width:28px;height:28px" viewBox="0 0 28 28"><circle cx="12.5" cy="13.5" r="11.8" fill="none" stroke="#6e6e6e" stroke-width="1"/><circle cx="12.5" cy="13.5" r="9.6" fill="none" stroke="#6e6e6e" stroke-width="1"/><circle cx="12.5" cy="13.5" r="4.1" fill="#e0141c" stroke="#7a0000" stroke-width="0.7"/><circle cx="11.27" cy="12.27" r="1.4349999999999998" fill="#f5606a" opacity="0.6"/><circle cx="22.4" cy="13.5" r="4.1" fill="#e0141c" stroke="#7a0000" stroke-width="0.7"/><circle cx="21.169999999999998" cy="12.27" r="1.4349999999999998" fill="#f5606a" opacity="0.6"/></svg>
<svg style="left:779.5px;top:111.5px;width:9.5px;height:5px" viewBox="0 0 9.5 5"><path d="M0 0H9.5L4.75 5z" fill="#000"/></svg>
<svg style="left:798px;top:101.5px;width:28px;height:28px" viewBox="0 0 28 28"><path d="M11.5 0.5L21.5 24C18 26.5 6 26.5 2 24Z" fill="#4f86cc" stroke="#2f5a9a" stroke-width="0.9"/><path d="M4 18.5C9 19 14 16 16 13" fill="none" stroke="#6e6e6e" stroke-width="3.0" stroke-linecap="round"/><path d="M4 18.5C9 19 14 16 16 13" fill="none" stroke="#ffffff" stroke-width="1.6" stroke-linecap="round"/><circle cx="4" cy="18.3" r="3.9" fill="#e0141c" stroke="#7a0000" stroke-width="0.7"/><circle cx="2.83" cy="17.130000000000003" r="1.365" fill="#f5606a" opacity="0.6"/><circle cx="16.5" cy="12" r="3.9" fill="#e0141c" stroke="#7a0000" stroke-width="0.7"/><circle cx="15.33" cy="10.83" r="1.365" fill="#f5606a" opacity="0.6"/></svg>
<svg style="left:831px;top:111.5px;width:9.5px;height:5px" viewBox="0 0 9.5 5"><path d="M0 0H9.5L4.75 5z" fill="#000"/></svg>
<svg style="left:847.5px;top:101.5px;width:28px;height:28px" viewBox="0 0 28 28"><path d="M4 20C9 13 13 14 16 14C19 14 21 10 22.5 5" fill="none" stroke="#6e6e6e" stroke-width="3.0" stroke-linecap="round"/><path d="M4 20C9 13 13 14 16 14C19 14 21 10 22.5 5" fill="none" stroke="#ffffff" stroke-width="1.6" stroke-linecap="round"/><circle cx="6.2" cy="5.8" r="4.1" fill="#e0141c" stroke="#7a0000" stroke-width="0.7"/><circle cx="4.970000000000001" cy="4.57" r="1.4349999999999998" fill="#f5606a" opacity="0.6"/><circle cx="22.5" cy="4.3" r="4.1" fill="#e0141c" stroke="#7a0000" stroke-width="0.7"/><circle cx="21.27" cy="3.0700000000000003" r="1.4349999999999998" fill="#f5606a" opacity="0.6"/><circle cx="4.3" cy="22.5" r="4.1" fill="#e0141c" stroke="#7a0000" stroke-width="0.7"/><circle cx="3.0700000000000003" cy="21.27" r="1.4349999999999998" fill="#f5606a" opacity="0.6"/><circle cx="20.5" cy="20.5" r="4.1" fill="#e0141c" stroke="#7a0000" stroke-width="0.7"/><circle cx="19.27" cy="19.27" r="1.4349999999999998" fill="#f5606a" opacity="0.6"/></svg>
<svg style="left:883.5px;top:111.5px;width:9px;height:5px" viewBox="0 0 9 5"><path d="M0 0H9L4.5 5z" fill="#000"/></svg>
<div style="left:897.5px;top:100px;width:1px;height:28px;background:#cfcfcf"></div>
<svg style="left:906px;top:101.5px;width:28px;height:28px" viewBox="0 0 28 28"><path d="M4.5 22.5L9.5 11" stroke="#6e6e6e" stroke-width="3.0" stroke-linecap="round"/><path d="M4.5 22.5L9.5 11" stroke="#ffffff" stroke-width="1.6" stroke-linecap="round"/><path d="M9.5 11L16 22.5" stroke="#6e6e6e" stroke-width="3.0" stroke-linecap="round"/><path d="M9.5 11L16 22.5" stroke="#ffffff" stroke-width="1.6" stroke-linecap="round"/><path d="M16 22.5L23 5" stroke="#6e6e6e" stroke-width="3.0" stroke-linecap="round"/><path d="M16 22.5L23 5" stroke="#ffffff" stroke-width="1.6" stroke-linecap="round"/><circle cx="4.5" cy="22.5" r="4.1" fill="#e0141c" stroke="#7a0000" stroke-width="0.7"/><circle cx="3.2700000000000005" cy="21.27" r="1.4349999999999998" fill="#f5606a" opacity="0.6"/><circle cx="9.5" cy="11" r="4.1" fill="#e0141c" stroke="#7a0000" stroke-width="0.7"/><circle cx="8.27" cy="9.77" r="1.4349999999999998" fill="#f5606a" opacity="0.6"/><circle cx="16" cy="22.5" r="4.1" fill="#e0141c" stroke="#7a0000" stroke-width="0.7"/><circle cx="14.77" cy="21.27" r="1.4349999999999998" fill="#f5606a" opacity="0.6"/><circle cx="23.3" cy="4.6" r="4.1" fill="#e0141c" stroke="#7a0000" stroke-width="0.7"/><circle cx="22.07" cy="3.37" r="1.4349999999999998" fill="#f5606a" opacity="0.6"/></svg>
<svg style="left:944px;top:101.5px;width:28px;height:28px" viewBox="0 0 28 28"><path d="M4 5.5H22V22.5H4Z" fill="none" stroke="#6e6e6e" stroke-width="3.0" stroke-linecap="round"/><path d="M4 5.5H22V22.5H4Z" fill="none" stroke="#ffffff" stroke-width="1.6" stroke-linecap="round"/><circle cx="22.3" cy="4.8" r="4.1" fill="#e0141c" stroke="#7a0000" stroke-width="0.7"/><circle cx="21.07" cy="3.5700000000000003" r="1.4349999999999998" fill="#f5606a" opacity="0.6"/><circle cx="4.1" cy="22.5" r="4.1" fill="#e0141c" stroke="#7a0000" stroke-width="0.7"/><circle cx="2.87" cy="21.27" r="1.4349999999999998" fill="#f5606a" opacity="0.6"/></svg>
<svg style="left:980.5px;top:101.5px;width:28px;height:28px" viewBox="0 0 28 28"><path d="M13.5 1.5L25.5 8V20L13.5 26.5L1.5 20V8Z" fill="none" stroke="#6e6e6e" stroke-width="1"/><path d="M13.5 3.8L23.5 9.2V18.8L13.5 24.2L3.5 18.8V9.2Z" fill="none" stroke="#6e6e6e" stroke-width="1"/><circle cx="12.8" cy="15" r="4.1" fill="#e0141c" stroke="#7a0000" stroke-width="0.7"/><circle cx="11.57" cy="13.77" r="1.4349999999999998" fill="#f5606a" opacity="0.6"/><circle cx="22.6" cy="7.7" r="4.1" fill="#e0141c" stroke="#7a0000" stroke-width="0.7"/><circle cx="21.37" cy="6.470000000000001" r="1.4349999999999998" fill="#f5606a" opacity="0.6"/></svg>
<svg style="left:1016px;top:111.5px;width:9.5px;height:5px" viewBox="0 0 9.5 5"><path d="M0 0H9.5L4.75 5z" fill="#000"/></svg>
<svg style="left:1032.5px;top:101.5px;width:28px;height:28px" viewBox="0 0 28 28"><path d="M8 8H20A6.5 6.5 0 0 1 20 21H8A6.5 6.5 0 0 1 8 8Z" fill="none" stroke="#6e6e6e" stroke-width="1"/><path d="M8 6H20A8.5 8.5 0 0 1 20 23H8A8.5 8.5 0 0 1 8 6Z" fill="none" stroke="#6e6e6e" stroke-width="1"/><circle cx="10" cy="15" r="4.1" fill="#e0141c" stroke="#7a0000" stroke-width="0.7"/><circle cx="8.77" cy="13.77" r="1.4349999999999998" fill="#f5606a" opacity="0.6"/><circle cx="19.8" cy="5.7" r="4.1" fill="#e0141c" stroke="#7a0000" stroke-width="0.7"/><circle cx="18.57" cy="4.470000000000001" r="1.4349999999999998" fill="#f5606a" opacity="0.6"/></svg>
<div style="left:1067.5px;top:100px;width:1px;height:28px;background:#cfcfcf"></div>
<svg style="left:1076.5px;top:101.5px;width:28px;height:28px" viewBox="0 0 28 28"><path d="M6 1V8" fill="none" stroke="#6e6e6e" stroke-width="3.0" stroke-linecap="round"/><path d="M6 1V8" fill="none" stroke="#ffffff" stroke-width="1.6" stroke-linecap="round"/><path d="M6 8C6 15 12 20 18 20H27" fill="none" stroke="#6e6e6e" stroke-width="3.0" stroke-linecap="round"/><path d="M6 8C6 15 12 20 18 20H27" fill="none" stroke="#ffffff" stroke-width="1.6" stroke-linecap="round"/><path d="M3 17H8M5.5 14.5V23" stroke="#9a9a9a" stroke-width="2" stroke-dasharray="2 1.3"/><circle cx="6.3" cy="9.2" r="4.1" fill="#e0141c" stroke="#7a0000" stroke-width="0.7"/><circle cx="5.07" cy="7.97" r="1.4349999999999998" fill="#f5606a" opacity="0.6"/><circle cx="19" cy="20" r="4.1" fill="#e0141c" stroke="#7a0000" stroke-width="0.7"/><circle cx="17.77" cy="18.77" r="1.4349999999999998" fill="#f5606a" opacity="0.6"/></svg>
<svg style="left:1112.5px;top:111.5px;width:9px;height:5px" viewBox="0 0 9 5"><path d="M0 0H9L4.5 5z" fill="#000"/></svg>
<svg style="left:1129px;top:101.5px;width:28px;height:28px" viewBox="0 0 28 28"><path d="M4 25L16 1.5" stroke="#6e6e6e" stroke-width="3.0" stroke-linecap="round"/><path d="M4 25L16 1.5" stroke="#ffffff" stroke-width="1.6" stroke-linecap="round"/><path d="M8 9L24 25" stroke="#6e6e6e" stroke-width="3.0" stroke-linecap="round"/><path d="M8 9L24 25" stroke="#ffffff" stroke-width="1.6" stroke-linecap="round"/><path d="M2 2L3.5 4.5" stroke="#777" stroke-width="1.6"/><circle cx="12.5" cy="11.5" r="4.1" fill="#e0141c" stroke="#7a0000" stroke-width="0.7"/><circle cx="11.27" cy="10.27" r="1.4349999999999998" fill="#f5606a" opacity="0.6"/></svg>
<svg style="left:1166px;top:101.5px;width:28px;height:28px" viewBox="0 0 28 28"><path d="M6 22L15 13" stroke="#6e6e6e" stroke-width="3.0" stroke-linecap="round"/><path d="M6 22L15 13" stroke="#ffffff" stroke-width="1.6" stroke-linecap="round"/><path d="M16 10L20 6" stroke="#6e6e6e" stroke-width="2.6" stroke-dasharray="3 1.5"/><path d="M14.5 3H24V12.5" fill="none" stroke="#6e6e6e" stroke-width="3.0" stroke-linecap="round"/><path d="M14.5 3H24V12.5" fill="none" stroke="#ffffff" stroke-width="1.6" stroke-linecap="round"/><circle cx="5.3" cy="22.3" r="4.1" fill="#e0141c" stroke="#7a0000" stroke-width="0.7"/><circle cx="4.07" cy="21.07" r="1.4349999999999998" fill="#f5606a" opacity="0.6"/></svg>
<svg style="left:1200px;top:98px;width:34px;height:34px" viewBox="0 0 34 34"><path d="M4.2 20.5L13 15.9L27.5 16.9L18.3 21Z" fill="#7aa8e0" stroke="#12213d" stroke-width="0.9" stroke-linejoin="round"/><path d="M4.2 20.5L18.3 21V29.8L4.2 29.3Z" fill="#5a8ed0" stroke="#12213d" stroke-width="0.9" stroke-linejoin="round"/><path d="M18.3 21L27.5 16.9V25.6L18.3 29.8Z" fill="#2f5fa5" stroke="#12213d" stroke-width="0.9" stroke-linejoin="round"/><path d="M20.3 15.5L20.8 10" stroke="#1c2f52" stroke-width="2"/><path d="M18.5 11.8L21 8.5L23.3 11.8Z" fill="#3a6fb8" stroke="#1c2f52" stroke-width="0.8"/><path d="M14.5 6.5L26 7" stroke="#1c2f52" stroke-width="2.2"/><path d="M14.5 6.5L26 7" stroke="#4a7cc4" stroke-width="1"/><circle cx="12.6" cy="6.3" r="2.5" fill="#e0141c" stroke="#7a0000" stroke-width="0.7"/><circle cx="11.85" cy="5.55" r="0.875" fill="#f5606a" opacity="0.6"/><circle cx="28" cy="7.1" r="2.5" fill="#e0141c" stroke="#7a0000" stroke-width="0.7"/><circle cx="27.25" cy="6.35" r="0.875" fill="#f5606a" opacity="0.6"/></svg>
<svg style="left:1240px;top:101.5px;width:28px;height:28px" viewBox="0 0 28 28"><circle cx="17.5" cy="8.5" r="7.2" fill="none" stroke="#8ab0f4" stroke-width="3.2" stroke-dasharray="2.6 1.2"/><rect x="4.5" y="11.5" width="12" height="13" fill="none" stroke="#8ab0f4" stroke-width="2.6" stroke-dasharray="2.6 1.2"/><circle cx="14.5" cy="11.5" r="5.5" fill="none" stroke="#d85a5a" stroke-width="1.3"/><circle cx="14.5" cy="11.5" r="7.5" fill="none" stroke="#d85a5a" stroke-width="1.3"/><rect x="1" y="14.5" width="14" height="12.5" rx="1" fill="none" stroke="#d85a5a" stroke-width="1.3"/><rect x="3" y="16.5" width="10" height="8.5" fill="none" stroke="#d85a5a" stroke-width="1.3"/></svg>
<svg style="left:1279px;top:101.5px;width:28px;height:28px" viewBox="0 0 28 28"><path d="M10 6V3.5C10 2 11 1 12.5 1H21C23 1 24.5 2.5 24.5 4.5V14.5C24.5 16.5 23 17 21 17H19" fill="none" stroke="#3a6fb8" stroke-width="2.6" stroke-dasharray="3.6 2.4" stroke-linecap="round"/><rect x="1.5" y="9.5" width="15" height="16" rx="2.5" fill="#f4f4f4" stroke="#9a1010" stroke-width="3"/><rect x="1.5" y="9.5" width="15" height="16" rx="2.5" fill="none" stroke="#e04040" stroke-width="1"/><rect x="5.5" y="13.5" width="7" height="8" fill="#f8f8f8" stroke="#3a0a0a" stroke-width="1.6"/></svg>
<div style="left:1311px;top:94px;width:1px;height:40px;background:#c6c6c6"></div>
<div style="left:1312px;top:94px;width:1px;height:40px;background:#fdfdfd"></div>
<div style="left:1318px;top:99px;width:1px;height:30px;background:repeating-linear-gradient(#b0b0b0 0 2px,transparent 2px 3px)"></div>
<div style="left:1319px;top:100px;width:1px;height:30px;background:repeating-linear-gradient(#fafafa 0 1px,transparent 1px 3px)"></div>
<div style="left:1325px;top:97px;width:37px;height:35px;background:#d9e7f5;border:1px solid #c6dcf0"></div>
<svg style="left:1324px;top:96px;width:40px;height:36px" viewBox="0 0 40 36"><path d="M9.5 13C10 10.5 11.5 9.5 14.5 9.5" fill="none" stroke="#555" stroke-width="2.4" stroke-linecap="round"/><path d="M10 11.5L9 13.8" stroke="#777" stroke-width="1.6"/><path d="M27.5 23C27.5 26 26 27.5 23 28" fill="none" stroke="#555" stroke-width="2.4" stroke-linecap="round"/><rect x="20.2" y="10" width="8.4" height="8.4" fill="#f4e4e4" stroke="#d80f0f" stroke-width="2.4"/><circle cx="27.6" cy="10.2" r="4.6" fill="none" stroke="#e04848" stroke-width="1.1"/><circle cx="27.6" cy="10.2" r="3" fill="none" stroke="#e04848" stroke-width="1"/><circle cx="26.8" cy="10.6" r="1.8" fill="#d01010"/><rect x="7" y="22.5" width="9" height="8.6" fill="none" stroke="#e05050" stroke-width="1.1"/><rect x="8.8" y="24.3" width="5.5" height="5" fill="none" stroke="#e05050" stroke-width="1"/><circle cx="14.8" cy="21.8" r="4.6" fill="#d81010"/><circle cx="15.5" cy="21.5" r="2.2" fill="none" stroke="#f07070" stroke-width="0.8"/></svg>
<div style="left:1363px;top:94px;width:1px;height:40px;background:#c6c6c6"></div>
<div style="left:1364px;top:94px;width:1px;height:40px;background:#fdfdfd"></div>
<div style="left:1369px;top:99px;width:1px;height:30px;background:repeating-linear-gradient(#b0b0b0 0 2px,transparent 2px 3px)"></div>
<div style="left:1370px;top:100px;width:1px;height:30px;background:repeating-linear-gradient(#fafafa 0 1px,transparent 1px 3px)"></div>
<svg style="left:1381.5px;top:101.5px;width:28px;height:28px" viewBox="0 0 28 28"><path d="M2.5 2.5L7 7M24.5 2.5L20 7M2.5 24.5L7 20M24.5 24.5L20 20" stroke="#5a0000" stroke-width="4.6"/><path d="M2.5 2.5L7 7M24.5 2.5L20 7M2.5 24.5L7 20M24.5 24.5L20 20" stroke="#e0141c" stroke-width="3.2"/><circle cx="13.5" cy="13.5" r="5.6" fill="#e0141c" stroke="#7a0000" stroke-width="0.7"/><circle cx="11.82" cy="11.82" r="1.9599999999999997" fill="#f5606a" opacity="0.6"/></svg>
<svg style="left:1420px;top:101.5px;width:26px;height:28px" viewBox="0 0 26 28"><path d="M2 25C1 18 3 11 7 8C12 4 17 3 24 3.5" fill="none" stroke="#5a0000" stroke-width="3.6" stroke-linecap="round"/><path d="M2 25C1 18 3 11 7 8C12 4 17 3 24 3.5" fill="none" stroke="#e0141c" stroke-width="2.4" stroke-linecap="round"/><circle cx="6" cy="8" r="5.3" fill="#e0141c" stroke="#7a0000" stroke-width="0.7"/><circle cx="4.41" cy="6.41" r="1.8549999999999998" fill="#f5606a" opacity="0.6"/></svg>
<svg style="left:1466.5px;top:101.5px;width:6px;height:28px" viewBox="0 0 6 28"><rect x="0.7" y="0.7" width="4.6" height="26.6" fill="#e0141c" stroke="#5a0000" stroke-width="1"/></svg>
<svg style="left:1526px;top:113px;width:9px;height:6px" viewBox="0 0 9 6"><path d="M0.5 0.5L3.5 3L0.5 5.5M5 0.5L8 3L5 5.5" fill="none" stroke="#555" stroke-width="1.1"/></svg>
<svg style="left:16px;top:141.5px;width:28px;height:28px" viewBox="0 0 28 28"><text x="1" y="9.5" font-family="Liberation Sans" font-weight="bold" font-size="10" fill="#4a6ad0">D</text><text x="0.5" y="18.5" font-family="Liberation Sans" font-weight="bold" font-size="10" fill="#4a6ad0">O</text><text x="1.5" y="27.5" font-family="Liberation Sans" font-weight="bold" font-size="10" fill="#4a6ad0">F</text><path d="M10 8.5H15V6.5L19.5 10L15 13.5V11.5H10Z M10 17.5H15V15.5L19.5 19L15 22.5V20.5H10Z" fill="#d01818" stroke="#700" stroke-width="0.6"/><path d="M23.3 5.3L23.3 23.8" stroke="#6a6a6a" stroke-width="3" stroke-linecap="round"/><path d="M23.3 5.3L23.3 23.8" stroke="#e8e8e8" stroke-width="1.6" stroke-linecap="round"/><circle cx="23.3" cy="5.3" r="4.3" fill="#6cd02a" stroke="#2f6a10" stroke-width="0.8"/><circle cx="23.3" cy="23.8" r="4.3" fill="#6cd02a" stroke="#2f6a10" stroke-width="0.8"/></svg>
<svg style="left:53.5px;top:141.5px;width:28px;height:28px" viewBox="0 0 28 28"><path d="M5.8 5.3C2 9 2 20 5.8 23.8" fill="none" stroke="#b0b0b0" stroke-width="2.6"/><path d="M5.8 5.3C2 9 2 20 5.8 23.8" fill="none" stroke="#f0f0f0" stroke-width="1.2"/><path d="M22.9 5.3L22.9 23.8" stroke="#8a8a8a" stroke-width="3.2" stroke-linecap="round"/><path d="M22.9 5.3L22.9 23.8" stroke="#e4e4e4" stroke-width="1.8000000000000003" stroke-linecap="round"/><path d="M9.5 10.5L13.5 7.0V9.0H18.5V12.0H13.5V14.0Z" fill="#9a9a9a" stroke="#808080" stroke-width="0.5"/><path d="M9.5 19L13.5 15.5V17.5H18.5V20.5H13.5V22.5Z" fill="#9a9a9a" stroke="#808080" stroke-width="0.5"/><circle cx="5.8" cy="5.3" r="4.3" fill="#b8b8b8" stroke="#9a9a9a" stroke-width="0.8"/><circle cx="5.8" cy="23.8" r="4.3" fill="#b8b8b8" stroke="#9a9a9a" stroke-width="0.8"/><circle cx="22.9" cy="5.3" r="4.3" fill="#b8b8b8" stroke="#9a9a9a" stroke-width="0.8"/><circle cx="22.9" cy="23.8" r="4.3" fill="#b8b8b8" stroke="#9a9a9a" stroke-width="0.8"/></svg>
<svg style="left:91px;top:141.5px;width:28px;height:28px" viewBox="0 0 28 28"><path d="M6.4 5.3C2.5 9 2.5 20 6.4 23.8" fill="none" stroke="#b0b0b0" stroke-width="2.6"/><path d="M6.4 5.3C2.5 9 2.5 20 6.4 23.8" fill="none" stroke="#f0f0f0" stroke-width="1.2"/><path d="M23 5.3L23 19.1" stroke="#8a8a8a" stroke-width="3.2" stroke-linecap="round"/><path d="M23 5.3L23 19.1" stroke="#e4e4e4" stroke-width="1.8000000000000003" stroke-linecap="round"/><path d="M10 12.5L14 9.0V11.0H20V14.0H14V16.0Z" fill="#9a9a9a" stroke="#808080" stroke-width="0.5"/><circle cx="6.4" cy="5.3" r="4.3" fill="#b8b8b8" stroke="#9a9a9a" stroke-width="0.8"/><circle cx="6.4" cy="23.8" r="4.3" fill="#8e8e8e" stroke="#777" stroke-width="0.8"/><circle cx="23" cy="5.3" r="4.3" fill="#b8b8b8" stroke="#9a9a9a" stroke-width="0.8"/><circle cx="23" cy="19.1" r="4.3" fill="#8e8e8e" stroke="#777" stroke-width="0.8"/></svg>
<svg style="left:125px;top:139px;width:32px;height:33px" viewBox="0 0 32 33"><path d="M5.9 6.1L5.9 27.9" stroke="#8a8a8a" stroke-width="3.6" stroke-linecap="round"/><path d="M5.9 6.1L5.9 27.9" stroke="#e4e4e4" stroke-width="2.2" stroke-linecap="round"/><circle cx="5.9" cy="6.1" r="2.8" fill="#8e8e8e" stroke="#777" stroke-width="0.8"/><circle cx="5.9" cy="27.9" r="2.8" fill="#8e8e8e" stroke="#777" stroke-width="0.8"/><rect x="9.5" y="10.1" width="3.3" height="14.6" fill="#bdbdbd" stroke="#888" stroke-width="0.8"/><path d="M15 14.4L25.5 4.5M20.2 17L27.1 10.1" stroke="#888" stroke-width="3.6"/><path d="M15 14.4L25.5 4.5M20.2 17L27.1 10.1" stroke="#c4c4c4" stroke-width="2"/><path d="M14.2 17.4L20.8 23.799999999999997L14.2 30.2V27.0L17.0 23.799999999999997L14.2 20.599999999999998Z" fill="#c4c4c4" stroke="#8a8a8a" stroke-width="1" stroke-linejoin="round"/><path d="M30 17.4L23.4 23.799999999999997L30 30.2V27.0L27.2 23.799999999999997L30 20.599999999999998Z" fill="#c4c4c4" stroke="#8a8a8a" stroke-width="1" stroke-linejoin="round"/></svg>
<svg style="left:162px;top:139px;width:34px;height:33px" viewBox="0 0 34 33"><path d="M6.5 6.1L6.5 27.9" stroke="#8a8a8a" stroke-width="3.6" stroke-linecap="round"/><path d="M6.5 6.1L6.5 27.9" stroke="#e4e4e4" stroke-width="2.2" stroke-linecap="round"/><circle cx="6.5" cy="6.1" r="2.8" fill="#8e8e8e" stroke="#777" stroke-width="0.8"/><circle cx="6.5" cy="27.9" r="2.8" fill="#8e8e8e" stroke="#777" stroke-width="0.8"/><path d="M28.1 6.1L28.1 27.9" stroke="#8a8a8a" stroke-width="3.6" stroke-linecap="round"/><path d="M28.1 6.1L28.1 27.9" stroke="#e4e4e4" stroke-width="2.2" stroke-linecap="round"/><circle cx="28.1" cy="6.1" r="2.8" fill="#8e8e8e" stroke="#777" stroke-width="0.8"/><circle cx="28.1" cy="27.9" r="2.8" fill="#8e8e8e" stroke="#777" stroke-width="0.8"/><path d="M10.7 14.2L20.6 4.9M15.2 17L22.3 10.1" stroke="#7a7a7a" stroke-width="4"/><path d="M10.7 14.2L20.6 4.9M15.2 17L22.3 10.1" stroke="#9a9a9a" stroke-width="2.4"/><rect x="21.3" y="15.4" width="3.2" height="15" fill="#9a9a9a" stroke="#7a7a7a" stroke-width="0.8"/></svg>
<svg style="left:200px;top:139px;width:32px;height:33px" viewBox="0 0 32 33"><rect x="3.6" y="13.4" width="3.5" height="11.3" fill="#7ee02a" stroke="#e8862a" stroke-width="1"/><path d="M16.8 13.4L24.7 4.9M19.8 16.6L26.7 10.1" stroke="#e8862a" stroke-width="4"/><path d="M16.8 13.4L24.7 4.9M19.8 16.6L26.7 10.1" stroke="#7ee02a" stroke-width="2.2"/><path d="M10.9 18L17.6 24.0L10.9 30V26.8L13.7 24.0L10.9 21.2Z" fill="#7ee02a" stroke="#e8862a" stroke-width="1" stroke-linejoin="round"/><path d="M26.5 17.5L20 23.75L26.5 30V26.8L23.7 23.75L26.5 20.7Z" fill="#7ee02a" stroke="#e8862a" stroke-width="1" stroke-linejoin="round"/><circle cx="10.3" cy="11.1" r="6.4" fill="#1e88d8" stroke="#0a1a2a" stroke-width="1"/><path d="M10.3 7.2L10.3 12" stroke="#000" stroke-width="2.2" stroke-linecap="round"/><circle cx="10.3" cy="14.2" r="1.1" fill="#000"/></svg>
<svg style="left:237px;top:139px;width:32px;height:33px" viewBox="0 0 32 33"><rect x="4.3" y="9.9" width="3.4" height="14.6" fill="#86c82a" stroke="#c8281a" stroke-width="1"/><path d="M16 13.5L24.8 4.9M20.5 16.5L27.2 10.3" stroke="#c8281a" stroke-width="4"/><path d="M16 13.5L24.8 4.9M20.5 16.5L27.2 10.3" stroke="#7ee02a" stroke-width="2.2"/><path d="M12 17.5L18.4 23.85L12 30.2V27.0L14.8 23.85L12 20.7Z" fill="#7ee02a" stroke="#c8281a" stroke-width="1" stroke-linejoin="round"/><path d="M27.4 17.5L21 23.85L27.4 30.2V27.0L24.599999999999998 23.85L27.4 20.7Z" fill="#7ee02a" stroke="#c8281a" stroke-width="1" stroke-linejoin="round"/><path d="M5 4.2H11L15.3 10.8L12.8 11.5L18.8 21.8L8.5 12.8L11.2 12L5 9.2L9.3 8.6Z" fill="#1e88d8" stroke="#000" stroke-width="1" stroke-linejoin="round"/></svg>
<svg style="left:274px;top:139px;width:34px;height:33px" viewBox="0 0 34 33"><ellipse cx="16.6" cy="17" rx="15.5" ry="8.6" transform="rotate(-44 16.6 17)" fill="none" stroke="#8a8a8a" stroke-width="1.3"/><ellipse cx="16.6" cy="17" rx="13.6" ry="6.8" transform="rotate(-44 16.6 17)" fill="none" stroke="#9a9a9a" stroke-width="1.1"/><path d="M6 27.5L27.5 5.8" stroke="#8a8a8a" stroke-width="3.2" stroke-linecap="round"/><path d="M6 27.5L27.5 5.8" stroke="#c8c8c8" stroke-width="1.8000000000000003" stroke-linecap="round"/><path d="M11 12L22.5 22.5" stroke="#8a8a8a" stroke-width="3.2" stroke-linecap="round"/><path d="M11 12L22.5 22.5" stroke="#c8c8c8" stroke-width="1.8000000000000003" stroke-linecap="round"/><circle cx="11.6" cy="21" r="2.4" fill="#c4c4c4" stroke="#9a9a9a" stroke-width="0.8"/><circle cx="21.7" cy="11.7" r="2.4" fill="#c4c4c4" stroke="#9a9a9a" stroke-width="0.8"/></svg>
<svg style="left:314.5px;top:141.5px;width:28px;height:28px" viewBox="0 0 28 28"><path d="M5.2 5.2C2 9 2 20 5.2 23.6 M22.9 5.2C26 9 26 20 22.9 23.6" fill="none" stroke="#a6a6a6" stroke-width="2.6"/><path d="M5.2 5.2C2 9 2 20 5.2 23.6 M22.9 5.2C26 9 26 20 22.9 23.6" fill="none" stroke="#eee" stroke-width="1.1"/><path d="M14.3 8.9L14.3 20" stroke="#8a8a8a" stroke-width="3.2" stroke-linecap="round"/><path d="M14.3 8.9L14.3 20" stroke="#e4e4e4" stroke-width="1.8000000000000003" stroke-linecap="round"/><circle cx="14.3" cy="8.9" r="2.5" fill="#8e8e8e" stroke="#777" stroke-width="0.8"/><circle cx="14.3" cy="20" r="2.5" fill="#8e8e8e" stroke="#777" stroke-width="0.8"/><circle cx="5.2" cy="5.2" r="4.5" fill="#8e8e8e" stroke="#777" stroke-width="0.8"/><circle cx="5.2" cy="23.6" r="4.5" fill="#8e8e8e" stroke="#777" stroke-width="0.8"/><circle cx="22.9" cy="5.2" r="4.5" fill="#8e8e8e" stroke="#777" stroke-width="0.8"/><circle cx="22.9" cy="23.6" r="4.5" fill="#8e8e8e" stroke="#777" stroke-width="0.8"/></svg>
<svg style="left:351px;top:141.5px;width:28px;height:28px" viewBox="0 0 28 28"><path d="M1 3H8M1 7H8" stroke="#999" stroke-width="2.2"/><path d="M13.2 5.2C10 9 10 20 13.2 23.6 M22.9 5.2C19.7 9 19.7 20 22.9 23.6" fill="none" stroke="#a6a6a6" stroke-width="2.6"/><path d="M13.2 5.2C10 9 10 20 13.2 23.6 M22.9 5.2C19.7 9 19.7 20 22.9 23.6" fill="none" stroke="#eee" stroke-width="1.1"/><circle cx="13.2" cy="5.2" r="4.5" fill="#8e8e8e" stroke="#777" stroke-width="0.8"/><circle cx="13.2" cy="23.6" r="4.5" fill="#8e8e8e" stroke="#777" stroke-width="0.8"/><circle cx="22.9" cy="5.2" r="4.5" fill="#8e8e8e" stroke="#777" stroke-width="0.8"/><circle cx="22.9" cy="23.6" r="4.5" fill="#8e8e8e" stroke="#777" stroke-width="0.8"/></svg>
<svg style="left:386.5px;top:153px;width:9.5px;height:5px" viewBox="0 0 9.5 5"><path d="M0 0H9.5L4.75 5z" fill="#777"/></svg>
<svg style="left:403px;top:141.5px;width:28px;height:28px" viewBox="0 0 28 28"><path d="M3.1 14.6L3.1 25" stroke="#8a8a8a" stroke-width="2.6" stroke-linecap="round"/><path d="M3.1 14.6L3.1 25" stroke="#e4e4e4" stroke-width="1.2000000000000002" stroke-linecap="round"/><circle cx="3.1" cy="14.6" r="2.3" fill="#8e8e8e" stroke="#777" stroke-width="0.8"/><circle cx="3.1" cy="25" r="2.3" fill="#8e8e8e" stroke="#777" stroke-width="0.8"/><path d="M10.3 10.8L10.3 21.7" stroke="#8a8a8a" stroke-width="2.6" stroke-linecap="round"/><path d="M10.3 10.8L10.3 21.7" stroke="#e4e4e4" stroke-width="1.2000000000000002" stroke-linecap="round"/><circle cx="10.3" cy="10.8" r="2.3" fill="#8e8e8e" stroke="#777" stroke-width="0.8"/><circle cx="10.3" cy="21.7" r="2.3" fill="#8e8e8e" stroke="#777" stroke-width="0.8"/><path d="M17.6 7.1L17.6 18.3" stroke="#8a8a8a" stroke-width="2.6" stroke-linecap="round"/><path d="M17.6 7.1L17.6 18.3" stroke="#e4e4e4" stroke-width="1.2000000000000002" stroke-linecap="round"/><circle cx="17.6" cy="7.1" r="2.3" fill="#8e8e8e" stroke="#777" stroke-width="0.8"/><circle cx="17.6" cy="18.3" r="2.3" fill="#8e8e8e" stroke="#777" stroke-width="0.8"/><path d="M24.9 3.3L24.9 14.9" stroke="#8a8a8a" stroke-width="2.6" stroke-linecap="round"/><path d="M24.9 3.3L24.9 14.9" stroke="#e4e4e4" stroke-width="1.2000000000000002" stroke-linecap="round"/><circle cx="24.9" cy="3.3" r="2.3" fill="#8e8e8e" stroke="#777" stroke-width="0.8"/><circle cx="24.9" cy="14.9" r="2.3" fill="#8e8e8e" stroke="#777" stroke-width="0.8"/></svg>
<svg style="left:440px;top:141.5px;width:28px;height:28px" viewBox="0 0 28 28"><path d="M3 3L15 15M15 3L3 15" stroke="#e01818" stroke-width="3.4"/><path d="M16 18L24 11M19 20L26 14" stroke="#2a6a10" stroke-width="3"/><path d="M16 18L24 11M19 20L26 14" stroke="#5ab02a" stroke-width="1.6"/><path d="M15 16H17V26H15Z M17 21L22 24.5V27L17 23Z M27 19L22 23L27 27V25L24.5 23L27 21Z" fill="#5ab02a" stroke="#2a6a10" stroke-width="0.7"/></svg>
<div style="left:474px;top:135px;width:1px;height:39px;background:#c6c6c6"></div>
<div style="left:475px;top:135px;width:1px;height:39px;background:#fdfdfd"></div>
<div style="left:480px;top:140px;width:1px;height:30px;background:repeating-linear-gradient(#b0b0b0 0 2px,transparent 2px 3px)"></div>
<div style="left:481px;top:141px;width:1px;height:30px;background:repeating-linear-gradient(#fafafa 0 1px,transparent 1px 3px)"></div>
<svg style="left:493px;top:141.5px;width:28px;height:28px" viewBox="0 0 28 28"><path d="M5.2 7.2L23.2 4.4L21.4 22L3.2 24.1Z" fill="none" stroke="#2a6a10" stroke-width="3.4"/><path d="M5.2 7.2L23.2 4.4L21.4 22L3.2 24.1Z" fill="none" stroke="#6cd02a" stroke-width="2"/><rect x="6.5" y="9.5" width="14" height="9" rx="2" transform="rotate(-40 13.5 14)" fill="#f0f0f0" stroke="#707070" stroke-width="1"/><rect x="8.8" y="11.3" width="9.4" height="5.4" rx="1.2" transform="rotate(-40 13.5 14)" fill="none" stroke="#707070" stroke-width="1"/><circle cx="5.2" cy="7.2" r="3.1" fill="#e0141c" stroke="#7a0000" stroke-width="0.7"/><circle cx="4.2700000000000005" cy="6.2700000000000005" r="1.085" fill="#f5606a" opacity="0.6"/><circle cx="23.2" cy="4.4" r="3.1" fill="#e0141c" stroke="#7a0000" stroke-width="0.7"/><circle cx="22.27" cy="3.4700000000000006" r="1.085" fill="#f5606a" opacity="0.6"/><circle cx="3.2" cy="24.1" r="3.1" fill="#e0141c" stroke="#7a0000" stroke-width="0.7"/><circle cx="2.2700000000000005" cy="23.17" r="1.085" fill="#f5606a" opacity="0.6"/><circle cx="21.4" cy="22" r="3.1" fill="#e0141c" stroke="#7a0000" stroke-width="0.7"/><circle cx="20.47" cy="21.07" r="1.085" fill="#f5606a" opacity="0.6"/></svg>
<svg style="left:528px;top:153px;width:9px;height:4.5px" viewBox="0 0 9 4.5"><path d="M0 0H9L4.5 4.5z" fill="#000"/></svg>
<svg style="left:540px;top:138px;width:34px;height:34px" viewBox="0 0 34 34"><ellipse cx="7.9" cy="12.1" rx="3.2" ry="1.5" transform="rotate(-55 7.9 12.1)" fill="#f4f4f4" stroke="#9a9a9a" stroke-width="1.1"/><ellipse cx="6.5" cy="22.1" rx="3.2" ry="1.5" transform="rotate(70 6.5 22.1)" fill="#f4f4f4" stroke="#9a9a9a" stroke-width="1.1"/><ellipse cx="13.5" cy="29.0" rx="3.2" ry="1.5" transform="rotate(15 13.5 29.0)" fill="#f4f4f4" stroke="#9a9a9a" stroke-width="1.1"/><ellipse cx="23.5" cy="26.9" rx="3.2" ry="1.5" transform="rotate(-45 23.5 26.9)" fill="#f4f4f4" stroke="#9a9a9a" stroke-width="1.1"/><path d="M13.5 7.7C17 6.5 21 7 24 9.5C27 12.5 28 17 27.3 21.5" fill="none" stroke="#9a9a9a" stroke-width="2.6" stroke-linecap="round"/><path d="M13.5 7.7C17 6.5 21 7 24 9.5C27 12.5 28 17 27.3 21.5" fill="none" stroke="#eeeeee" stroke-width="1.2000000000000002" stroke-linecap="round"/><circle cx="13.5" cy="7.7" r="2.5" fill="#9a9a9a" stroke="#888" stroke-width="0.8"/><circle cx="22.5" cy="6.9" r="2.5" fill="#9a9a9a" stroke="#888" stroke-width="0.8"/><circle cx="28.1" cy="11.5" r="2.5" fill="#9a9a9a" stroke="#888" stroke-width="0.8"/><circle cx="27.3" cy="21.5" r="2.5" fill="#9a9a9a" stroke="#888" stroke-width="0.8"/></svg>
<svg style="left:578px;top:139.5px;width:34px;height:34px" viewBox="0 0 34 34"><path d="M10.4 5V24M18.4 5V24M4 11.2H23.5M4 18.3H23.5" stroke="#8a8a8a" stroke-width="4.0" stroke-linecap="round"/><path d="M10.4 5V24M18.4 5V24M4 11.2H23.5M4 18.3H23.5" stroke="#bdbdbd" stroke-width="2.5" stroke-linecap="round"/><path d="M10.4 5V18.3M4 11.2H17" stroke="#7a7a7a" stroke-width="4.2" stroke-linecap="round"/><path d="M10.4 5V18.3M4 11.2H17" stroke="#b4b4b4" stroke-width="2.6" stroke-linecap="round"/><path d="M16 26C17 22 20 21.5 24 20.5C26 20 27 18 27.8 15" fill="none" stroke="#8a8a8a" stroke-width="2.4" stroke-linecap="round"/><path d="M16 26C17 22 20 21.5 24 20.5C26 20 27 18 27.8 15" fill="none" stroke="#eeeeee" stroke-width="1.0" stroke-linecap="round"/><circle cx="27.9" cy="15" r="2.7" fill="#9a9a9a" stroke="#808080" stroke-width="0.8"/><circle cx="27.7" cy="25" r="2.7" fill="#9a9a9a" stroke="#808080" stroke-width="0.8"/><circle cx="16" cy="28.6" r="2.7" fill="#9a9a9a" stroke="#808080" stroke-width="0.8"/></svg>
<svg style="left:615px;top:139.5px;width:34px;height:34px" viewBox="0 0 34 34"><path d="M10.4 5V24M18.4 5V24M4 11.2H23.5M4 18.3H23.5" stroke="#8a8a8a" stroke-width="4.0" stroke-linecap="round"/><path d="M10.4 5V24M18.4 5V24M4 11.2H23.5M4 18.3H23.5" stroke="#c4c4c4" stroke-width="2.5" stroke-linecap="round"/><path d="M4 11.2H17" stroke="#7a7a7a" stroke-width="4.2" stroke-linecap="round"/><path d="M4 11.2H17" stroke="#a8a8a8" stroke-width="2.6" stroke-linecap="round"/><path d="M16 26C17 22 20 21.5 24 20.5C26 20 27 18 27.8 15" fill="none" stroke="#8a8a8a" stroke-width="2.4" stroke-linecap="round"/><path d="M16 26C17 22 20 21.5 24 20.5C26 20 27 18 27.8 15" fill="none" stroke="#eeeeee" stroke-width="1.0" stroke-linecap="round"/><circle cx="27.9" cy="15" r="2.7" fill="#9a9a9a" stroke="#808080" stroke-width="0.8"/><circle cx="27.7" cy="25" r="2.7" fill="#9a9a9a" stroke="#808080" stroke-width="0.8"/><circle cx="16" cy="28.6" r="2.7" fill="#9a9a9a" stroke="#808080" stroke-width="0.8"/></svg>
<svg style="left:652px;top:139.5px;width:34px;height:34px" viewBox="0 0 34 34"><path d="M10.6 4.5V24M18.75 4.5V24M4.5 11H24M4.5 18.3H24" stroke="#3a7a10" stroke-width="4" stroke-linecap="round"/><path d="M10.6 4.5V24M18.75 4.5V24M4.5 11H24M4.5 18.3H24" stroke="#78d02a" stroke-width="2.6" stroke-linecap="round"/><rect x="4.3" y="9" width="13.2" height="4.7" fill="#5a90d8" stroke="#1e3a6a" stroke-width="0.9"/><path d="M16.5 27C18 22 21 21 28.3 15M23 21.5L28.3 25" fill="none" stroke="#888" stroke-width="1.8" stroke-linecap="round"/><path d="M16.5 27C18 22 21 21 28.3 15M23 21.5L28.3 25" fill="none" stroke="#eee" stroke-width="0.40000000000000013" stroke-linecap="round"/><circle cx="28.3" cy="15" r="2.7" fill="#e0141c" stroke="#7a0000" stroke-width="0.7"/><circle cx="27.490000000000002" cy="14.19" r="0.945" fill="#f5606a" opacity="0.6"/><circle cx="28.3" cy="25" r="2.7" fill="#e0141c" stroke="#7a0000" stroke-width="0.7"/><circle cx="27.490000000000002" cy="24.19" r="0.945" fill="#f5606a" opacity="0.6"/><circle cx="16.5" cy="28.6" r="2.7" fill="#e0141c" stroke="#7a0000" stroke-width="0.7"/><circle cx="15.69" cy="27.790000000000003" r="0.945" fill="#f5606a" opacity="0.6"/><circle cx="23" cy="21.5" r="2.3" fill="#9acd20" stroke="#6a7a10" stroke-width="0.7"/></svg>
<svg style="left:691px;top:153px;width:9.5px;height:4.5px" viewBox="0 0 9.5 4.5"><path d="M0 0H9.5L4.75 4.5z" fill="#000"/></svg>
<div style="left:0px;top:177px;width:321px;height:22px;background:#dadada;border:1px solid #c8c8c8"></div>
<span class="t" style="left:6px;top:182.99px;font-size:14.2px;color:#000;font-weight:normal;">Combo View</span>
<svg style="left:303px;top:183px;width:12px;height:12px" viewBox="0 0 12 12"><path d="M1.5 4.5h7v6h-7z M1.5 6.5h7 M3.5 4.5v-3h7v6h-2 M3.5 3.5h7" fill="none" stroke="#333" stroke-width="1.2"/></svg>
<div style="left:2px;top:205px;width:61px;height:27px;background:#f0f0f0;border:1px solid #dcdcdc;border-bottom:none"></div>
<span class="t" style="left:14.4px;top:211.82px;font-size:13px;color:#000;font-weight:normal;">Model</span>
<div style="left:62px;top:202px;width:88px;height:31px;background:#fff;border:1px solid #dcdcdc;border-bottom:none"></div>
<svg style="left:79px;top:206px;width:19px;height:19px" viewBox="0 0 19 19"><path d="M1 4L4 1L15.5 12.5L12.5 15.5Z" fill="#2f5a9a" stroke="#1a2f55" stroke-width="0.9"/><path d="M2.5 2.5L14 14" stroke="#5a88c8" stroke-width="1.2"/><path d="M12.5 15.5L15.5 12.5L18 18Z" fill="#e8e8e8" stroke="#1a2f55" stroke-width="0.8"/><path d="M16.8 16.8L18 18" stroke="#111" stroke-width="1.4"/></svg>
<span class="t" style="left:103px;top:211.82px;font-size:13px;color:#000;font-weight:normal;">Tasks</span>
<div style="left:0px;top:230px;width:320px;height:550px;background:#fff;border:1px solid #dcdcdc"></div>
<div style="left:2px;top:233px;width:1px;height:544px;background:#b4b8bc"></div>
<div style="left:316px;top:233px;width:1px;height:544px;background:#a8acb0"></div>
<div style="left:4px;top:234px;width:292px;height:542px;background:linear-gradient(#ababc1 0px,#333365 344px,#333365 100%)"></div>
<div style="left:63px;top:230px;width:86px;height:3px;background:#fff"></div>
<div style="left:296px;top:234px;width:20px;height:542px;background:#f0f0f0"></div>
<div style="left:296px;top:234px;width:20px;height:20px;background:#fff"></div>
<div style="left:296px;top:754px;width:20px;height:22px;background:#f0f0f0"></div>
<div style="left:296px;top:254.7px;width:20px;height:233px;background:#cdcdcd"></div>
<svg style="left:302px;top:242px;width:10px;height:7px" viewBox="0 0 10 7"><path d="M1 5.5L5 1.5L9 5.5" fill="none" stroke="#555" stroke-width="2"/></svg>
<svg style="left:302px;top:762px;width:10px;height:7px" viewBox="0 0 10 7"><path d="M1 1.5L5 5.5L9 1.5" fill="none" stroke="#555" stroke-width="2"/></svg>
<div style="left:106px;top:255px;width:88px;height:26px;background:#e1e1e1;border:1px solid #adadad"></div>
<span class="t" style="left:134px;top:261.82px;font-size:13px;color:#000;font-weight:normal;">Close</span>
<div style="left:13px;top:303px;width:273px;height:167px;border:1px solid #fff;border-radius:3px 3px 0 0;background:transparent"></div>
<div style="left:14px;top:304px;width:271px;height:28px;background:linear-gradient(90deg,#ffffff 0%,#e6ecfb 45%,#c6d3f5 100%);border-radius:2px 2px 0 0"></div>
<svg style="left:23px;top:308px;width:16px;height:18px" viewBox="0 0 16 18"><rect x="0.5" y="1.5" width="14" height="16" fill="#ececec" stroke="#9a9a9a" stroke-width="1"/><circle cx="13" cy="3" r="2.6" fill="#f6f030" stroke="#fff46a" stroke-width="0.8"/></svg>
<span class="t" style="left:42.3px;top:310.90px;font-size:13.6px;color:#215dc6;font-weight:bold;">Solver messages</span>
<svg style="left:263px;top:308px;width:19px;height:19px" viewBox="0 0 19 19"><circle cx="9.5" cy="9.5" r="9" fill="#f4f7fd" stroke="#c2cbe0" stroke-width="1"/><path d="M6 9L9.5 5.5L13 9M6 13.5L9.5 10L13 13.5" fill="none" stroke="#1b48b8" stroke-width="1.8"/></svg>
<div style="left:14px;top:332px;width:271px;height:1px;background:#f6f8fd"></div>
<div style="left:14px;top:333px;width:271px;height:136px;background:#d6dff7"></div>
<span class="t" style="left:30.4px;top:350.62px;font-size:13px;color:#000;font-weight:normal;">Empty sketch</span>
<div style="left:30px;top:398px;width:16px;height:16px;background:#fff;border:1px solid #333"></div>
<span class="t" style="left:51.8px;top:400.53px;font-size:13.1px;color:#000;font-weight:normal;">Auto remove redundants</span>
<div style="left:30px;top:429px;width:16px;height:16px;background:#fff;border:1px solid #333"></div>
<span class="t" style="left:51.8px;top:431.93px;font-size:13.1px;color:#000;font-weight:normal;">Auto update</span>
<div style="left:154px;top:426px;width:114px;height:25px;background:#e1e1e1;border:1px solid #adadad"></div>
<span class="t" style="left:190.4px;top:432.32px;font-size:13px;color:#000;font-weight:normal;">Update</span>
<div style="left:13px;top:480px;width:273px;height:31px;border:1px solid #fff;border-radius:3px 3px 0 0;background:transparent"></div>
<div style="left:14px;top:481px;width:271px;height:29px;background:linear-gradient(90deg,#ffffff 0%,#e6ecfb 45%,#c6d3f5 100%);border-radius:2px 2px 0 0"></div>
<svg style="left:23px;top:485px;width:16px;height:18px" viewBox="0 0 16 18"><rect x="0.5" y="1.5" width="14" height="16" fill="#ececec" stroke="#9a9a9a" stroke-width="1"/><circle cx="13" cy="3" r="2.6" fill="#f6f030" stroke="#fff46a" stroke-width="0.8"/></svg>
<span class="t" style="left:42.3px;top:487.90px;font-size:13.6px;color:#215dc6;font-weight:bold;">Edit controls</span>
<svg style="left:263px;top:485px;width:19px;height:19px" viewBox="0 0 19 19"><circle cx="9.5" cy="9.5" r="9" fill="#f4f7fd" stroke="#c2cbe0" stroke-width="1"/><path d="M6 9L9.5 5.5L13 9M6 13.5L9.5 10L13 13.5" fill="none" stroke="#1b48b8" stroke-width="1.8"/></svg>
<div style="left:13px;top:522px;width:273px;height:255px;border:1px solid #fff;border-radius:3px 3px 0 0;background:transparent"></div>
<div style="left:14px;top:523px;width:271px;height:29px;background:linear-gradient(90deg,#ffffff 0%,#e6ecfb 45%,#c6d3f5 100%);border-radius:2px 2px 0 0"></div>
<svg style="left:23px;top:527px;width:16px;height:18px" viewBox="0 0 16 18"><rect x="0.5" y="1.5" width="14" height="16" fill="#ececec" stroke="#9a9a9a" stroke-width="1"/><circle cx="13" cy="3" r="2.6" fill="#f6f030" stroke="#fff46a" stroke-width="0.8"/></svg>
<span class="t" style="left:42.3px;top:529.90px;font-size:13.6px;color:#215dc6;font-weight:bold;">Constraints</span>
<svg style="left:263px;top:527px;width:19px;height:19px" viewBox="0 0 19 19"><circle cx="9.5" cy="9.5" r="9" fill="#f4f7fd" stroke="#c2cbe0" stroke-width="1"/><path d="M6 9L9.5 5.5L13 9M6 13.5L9.5 10L13 13.5" fill="none" stroke="#1b48b8" stroke-width="1.8"/></svg>
<div style="left:14px;top:552px;width:271px;height:1px;background:#f6f8fd"></div>
<div style="left:14px;top:553px;width:271px;height:223px;background:#d6dff7"></div>
<span class="t" style="left:30.3px;top:572.95px;font-size:13.2px;color:#000;font-weight:normal;">Filter:</span>
<div style="left:154px;top:567px;width:115px;height:24px;background:#e1e1e1;border:1px solid #adadad"></div>
<span class="t" style="left:158.6px;top:573.12px;font-size:13px;color:#000;font-weight:normal;">All</span>
<svg style="left:253px;top:575px;width:10px;height:6px" viewBox="0 0 10 6"><path d="M0.5 0.5L5 5L9.5 0.5" fill="none" stroke="#333" stroke-width="1.1"/></svg>
<div style="left:30px;top:600px;width:16px;height:16px;background:#fff;border:1px solid #333"></div>
<svg style="left:30px;top:600px;width:16px;height:16px" viewBox="0 0 16 16"><path d="M3.5 8L6.5 11L12.5 4.5" fill="none" stroke="#222" stroke-width="1.3"/></svg>
<span class="t" style="left:51.6px;top:602.95px;font-size:13.2px;color:#000;font-weight:normal;">Hide internal alignment</span>
<div style="left:30px;top:629px;width:16px;height:16px;background:#fff;border:1px solid #333"></div>
<span class="t" style="left:51.6px;top:631.95px;font-size:13.2px;color:#000;font-weight:normal;">Extended information</span>
<div style="left:30px;top:655.5px;width:239px;height:121px;background:#fff;border:1px solid #e3e9f9;border-bottom:none"></div>
<div style="left:2px;top:776px;width:315px;height:1px;background:#a8acb0"></div>
<div style="left:0px;top:777px;width:319px;height:3px;background:#fff"></div>
<div style="left:0px;top:780px;width:330px;height:5px;background:#f0f0f0"></div>
<div style="left:327px;top:176px;width:1209px;height:577px;background:linear-gradient(#333365,#ababc1)"></div>
<div style="left:902px;top:177px;width:2px;height:576px;background:#7df57d"></div>
<div style="left:327px;top:452px;width:1209px;height:2px;background:#c86b6f"></div>
<svg style="left:898.5px;top:450px;width:7px;height:7px" viewBox="0 0 7 7"><circle cx="3.5" cy="3.5" r="3.3" fill="#ff2200"/></svg>
<svg style="left:1420px;top:175px;width:116px;height:120px" viewBox="0 0 116 120"><path d="M50 16.5L59.3 6.6L68.5 16.5Z" fill="#9a9abb"/><path d="M50 103L59.3 112.6L68.5 103Z" fill="#9a9abb"/><path d="M16.2 50L6.6 59.5L16.2 69Z" fill="#9a9abb"/><path d="M101.6 50L112.6 59.5L101.6 69Z" fill="#9a9abb"/><path d="M44 15.5C34 18 27 22 23 27L20.5 24.5L19.8 35L30.5 32.5L27.3 30.3C31 26 37 22.5 45.5 20.5Z" fill="#9a9abb"/><path d="M74 15.5C84 18 91 22 95 27L97.5 24.5L98.2 35L87.5 32.5L90.7 30.3C87 26 81 22.5 72.5 20.5Z" fill="#9a9abb"/><rect x="33.2" y="32.7" width="52.4" height="53.3" rx="9" fill="#9c9cbe"/><rect x="38" y="35" width="43" height="49" rx="2" fill="#9494b6"/><path d="M35 36.5L41 32.8H78L84 37V79L78 86H41L35 80Z" fill="#9a9abc"/><circle cx="38.2" cy="37.8" r="4.6" fill="#c4c4d8"/><circle cx="38.2" cy="37.8" r="1.3" fill="#5a5a80"/><circle cx="80.6" cy="37.8" r="4.6" fill="#c4c4d8"/><circle cx="80.6" cy="37.8" r="1.3" fill="#5a5a80"/><circle cx="38.2" cy="80.8" r="4.6" fill="#c4c4d8"/><circle cx="38.2" cy="80.8" r="1.3" fill="#5a5a80"/><circle cx="80.6" cy="80.8" r="4.6" fill="#c4c4d8"/><circle cx="80.6" cy="80.8" r="1.3" fill="#5a5a80"/><path d="M43 40H75L78.5 43.5V75L75 78.5H43L39.5 75V43.5Z" fill="#c7c7da" stroke="#dcdcea" stroke-width="1.2"/><path d="M41 40.5L46 45.5M77.5 40.5L72.5 45.5M41 77.5L46 72.5M77.5 77.5L72.5 72.5" stroke="#d8d8e6" stroke-width="1.3"/><text x="60.5" y="64.6" text-anchor="middle" font-family="Liberation Sans" font-weight="bold" font-size="12.5" fill="#000" stroke="#000" stroke-width="0.7" letter-spacing="-1.2" transform="translate(60.5 0) scale(0.86 1) translate(-60.5 0)">TOP</text><path d="M40 50.8V78.7" stroke="#8cf08c" stroke-width="1.3"/><path d="M40 78.7H68" stroke="#f4a0a0" stroke-width="1.5"/><path d="M40 78.7L33.6 84.3" stroke="#2020e0" stroke-width="1.3"/><path d="M42.5 35.5L45 38.5L47.5 35.5M45 38.5V41.5" fill="none" stroke="#8cf08c" stroke-width="0.9"/><path d="M80.5 73.5L85 79M85 73.5L80.5 79" stroke="#f08080" stroke-width="0.9"/><path d="M31 83.5H35.5L31 89.3H35.5" fill="none" stroke="#1010f0" stroke-width="1"/><path d="M78 96L83 92.5H93.5V104.5L89 108.2H78Z" fill="#9898b8"/><path d="M78 96H89V108.2 M89 96L93.5 92.5" fill="none" stroke="#9090b4" stroke-width="0.8"/><path d="M96.4 97.9H106.3L101.4 103Z" fill="#3b3b62"/></svg>
<svg style="left:1500px;top:697px;width:36px;height:32px" viewBox="0 0 36 32"><path d="M8.5 26.7V8" stroke="#1f8a1f" stroke-width="1.6"/><path d="M6 13.5L8.5 6.5L11 13.5Z" fill="#1f8a1f"/><path d="M8.5 26.7H28" stroke="#a02020" stroke-width="1.6"/><path d="M22 24.2L29 26.7L22 29.2Z" fill="#a02020"/><path d="M8.5 26.7H13" stroke="#111" stroke-width="1.2"/><circle cx="8.5" cy="26.7" r="2.4" fill="#2a2aa0"/><path d="M11.3 2.3L13.2 5L15.1 2.3M13.2 5V7.6" fill="none" stroke="#333" stroke-width="0.9"/><path d="M11.3 21.3H15L11.3 26H15" fill="none" stroke="#222" stroke-width="0.9"/><path d="M30.3 21.5L34.5 26.5M34.5 21.5L30.3 26.5" stroke="#444" stroke-width="0.9"/></svg>
<div style="left:329px;top:753px;width:135px;height:26px;background:#f0f0f0;border:1px solid #d9d9d9;border-top:none"></div>
<svg style="left:342px;top:755.5px;width:18px;height:18px" viewBox="0 0 19 18"><defs><linearGradient id="lgF" x1="0" y1="0" x2="1" y2="1"><stop offset="0" stop-color="#f02020"/><stop offset="1" stop-color="#b00808"/></linearGradient></defs><path d="M0.6 0.6H9.6V3.6H3.9V7.3H8.2V10.3H3.9V17.4H0.6Z" fill="url(#lgF)" stroke="#7a0a0e" stroke-width="0.5"/><g transform="translate(12.3,11.4)"><rect x="-1.3" y="-6.4" width="2.6" height="3.2" fill="#3f72bf" transform="rotate(0)"/><rect x="-1.3" y="-6.4" width="2.6" height="3.2" fill="#3f72bf" transform="rotate(45)"/><rect x="-1.3" y="-6.4" width="2.6" height="3.2" fill="#3f72bf" transform="rotate(90)"/><rect x="-1.3" y="-6.4" width="2.6" height="3.2" fill="#3f72bf" transform="rotate(135)"/><rect x="-1.3" y="-6.4" width="2.6" height="3.2" fill="#3f72bf" transform="rotate(180)"/><rect x="-1.3" y="-6.4" width="2.6" height="3.2" fill="#3f72bf" transform="rotate(225)"/><rect x="-1.3" y="-6.4" width="2.6" height="3.2" fill="#3f72bf" transform="rotate(270)"/><rect x="-1.3" y="-6.4" width="2.6" height="3.2" fill="#3f72bf" transform="rotate(315)"/><circle r="4.6" fill="#3f72bf" stroke="#2a4f8a" stroke-width="0.5"/><circle r="1.8" fill="#fff"/></g></svg>
<span class="t" style="left:365.8px;top:759.12px;font-size:13px;color:#000;font-weight:normal;">Start page</span>
<svg style="left:432px;top:757.5px;width:16px;height:16px" viewBox="0 0 16 16"><rect x="0.5" y="0.5" width="15" height="15" rx="2" fill="#d4d4d4" stroke="#b8b8b8"/><path d="M4.5 4.5L11.5 11.5M11.5 4.5L4.5 11.5" stroke="#fff" stroke-width="2.2"/></svg>
<div style="left:463.5px;top:753px;width:162px;height:28px;background:#fff;border:1px solid #dedede;border-top:none"></div>
<svg style="left:480px;top:757px;width:19px;height:18px" viewBox="0 0 19 18"><defs><linearGradient id="lgF" x1="0" y1="0" x2="1" y2="1"><stop offset="0" stop-color="#f02020"/><stop offset="1" stop-color="#b00808"/></linearGradient></defs><path d="M0.6 0.6H9.6V3.6H3.9V7.3H8.2V10.3H3.9V17.4H0.6Z" fill="url(#lgF)" stroke="#7a0a0e" stroke-width="0.5"/><g transform="translate(12.3,11.4)"><rect x="-1.3" y="-6.4" width="2.6" height="3.2" fill="#3f72bf" transform="rotate(0)"/><rect x="-1.3" y="-6.4" width="2.6" height="3.2" fill="#3f72bf" transform="rotate(45)"/><rect x="-1.3" y="-6.4" width="2.6" height="3.2" fill="#3f72bf" transform="rotate(90)"/><rect x="-1.3" y="-6.4" width="2.6" height="3.2" fill="#3f72bf" transform="rotate(135)"/><rect x="-1.3" y="-6.4" width="2.6" height="3.2" fill="#3f72bf" transform="rotate(180)"/><rect x="-1.3" y="-6.4" width="2.6" height="3.2" fill="#3f72bf" transform="rotate(225)"/><rect x="-1.3" y="-6.4" width="2.6" height="3.2" fill="#3f72bf" transform="rotate(270)"/><rect x="-1.3" y="-6.4" width="2.6" height="3.2" fill="#3f72bf" transform="rotate(315)"/><circle r="4.6" fill="#3f72bf" stroke="#2a4f8a" stroke-width="0.5"/><circle r="1.8" fill="#fff"/></g></svg>
<span class="t" style="left:504.4px;top:760.39px;font-size:13.5px;color:#000;font-weight:normal;">Unnamed : 1*</span>
<svg style="left:592.5px;top:759px;width:17px;height:17px" viewBox="0 0 16 16"><rect x="0.5" y="0.5" width="15" height="15" rx="2" fill="#e9703f" stroke="#d04a2a"/><path d="M4.5 4.5L11.5 11.5M11.5 4.5L4.5 11.5" stroke="#fff" stroke-width="2.2"/></svg>
<span class="t" style="left:2.8px;top:792.78px;font-size:13.05px;color:#000;font-weight:normal;">Preselected: Unnamed.Body001.Sketch.H_Axis (50.639755 mm,0.000000 mm,1.000000 &micro;m)</span>
<div style="left:1290px;top:786px;width:1px;height:29px;background:#d4d4d4"></div>
<div style="left:1296px;top:786px;width:89px;height:27px;background:#cce4f7;border:1px solid #3c8fd6"></div>
<svg style="left:1319px;top:792px;width:12px;height:16px" viewBox="0 0 12 16"><path d="M1 5C1 2.5 2.5 1 5 1H7C9.5 1 11 2.5 11 5V11C11 13.5 9.5 15 7 15H5C2.5 15 1 13.5 1 11V5" fill="none" stroke="#2a2a2a" stroke-width="1.7"/><path d="M6 1.5V5.5" stroke="#2a2a2a" stroke-width="1.6"/></svg>
<span class="t" style="left:1337px;top:793.16px;font-size:13.3px;color:#000;font-weight:normal;">CAD</span>
<svg style="left:1369.5px;top:797px;width:8px;height:4.5px" viewBox="0 0 8 4.5"><path d="M0 0H8L4.0 4.5z" fill="#000"/></svg>
<span class="t" style="left:1393.2px;top:793.16px;font-size:13.3px;color:#000;font-weight:normal;">171.93 mm x 81.87 mm</span>
<div style="left:1297px;top:533px;width:178px;height:255px;background:rgba(0,0,0,0.13);filter:blur(2px)"></div>
<div style="left:1295px;top:531px;width:177px;height:255px;background:#f0f0f0;border:1px solid #a0a0a0"></div>
<span class="t" style="left:1333.4px;top:540.96px;font-size:14px;color:#000;font-weight:normal;">Settings</span>
<svg style="left:1449.5px;top:543px;width:6px;height:8px" viewBox="0 0 6 8"><path d="M0.5 0L5.5 4L0.5 8Z" fill="#000"/></svg>
<div style="left:1328.5px;top:563px;width:138px;height:1px;background:#d7d7d7"></div>
<div style="left:1299px;top:729px;width:168px;height:27px;background:#91c9f7"></div>
<div style="left:1288.5px;top:724.5px;width:186.5px;height:36px;border:4.2px solid #fe7f1e"></div>
<span class="t" style="left:1333.4px;top:576.96px;font-size:14px;color:#000;font-weight:normal;">OpenInventor</span>
<span class="t" style="left:1333.4px;top:603.80px;font-size:13.6px;color:#000;font-weight:bold;">CAD</span>
<span class="t" style="left:1333.4px;top:629.66px;font-size:14px;color:#000;font-weight:normal;">Revit</span>
<span class="t" style="left:1333.4px;top:656.36px;font-size:14px;color:#000;font-weight:normal;">Blender</span>
<span class="t" style="left:1333.4px;top:682.86px;font-size:14px;color:#000;font-weight:normal;">MayaGesture</span>
<span class="t" style="left:1333.4px;top:709.16px;font-size:14px;color:#000;font-weight:normal;">Touchpad</span>
<span class="t" style="left:1333.4px;top:735.36px;font-size:14px;color:#000;font-weight:normal;">Gesture</span>
<span class="t" style="left:1333.4px;top:761.86px;font-size:14px;color:#000;font-weight:normal;">OpenCascade</span>
<svg style="left:1304.5px;top:576px;width:14px;height:15px" viewBox="0 0 14 15"><path d="M7 0.5L13.5 4V11L7 14.5L0.5 11V4Z" fill="#333a40"/><path d="M7 0.5L13.5 4L7 7.5L0.5 4Z" fill="#6e7478"/></svg>
<svg style="left:1305.5px;top:602.5px;width:12px;height:16px" viewBox="0 0 12 16"><path d="M1 5C1 2.5 2.5 1 5 1H7C9.5 1 11 2.5 11 5V11C11 13.5 9.5 15 7 15H5C2.5 15 1 13.5 1 11V5" fill="none" stroke="#2a2a2a" stroke-width="1.7"/><path d="M6 1.5V5.5" stroke="#2a2a2a" stroke-width="1.6"/></svg>
<svg style="left:1305.5px;top:628.5px;width:12px;height:16px" viewBox="0 0 12 16"><path d="M1 5C1 2.5 2.5 1 5 1H7C9.5 1 11 2.5 11 5V6.8C8.6 7.4 8.6 9.8 11 10.4V11C11 13.5 9.5 15 7 15H5C2.5 15 1 13.5 1 11V5" fill="none" stroke="#2a2a2a" stroke-width="1.7"/><path d="M6 1.5V5.5" stroke="#2a2a2a" stroke-width="1.6"/></svg>
<svg style="left:1305.5px;top:655px;width:12px;height:16px" viewBox="0 0 12 16"><path d="M1 5C1 2.5 2.5 1 5 1H7C9.5 1 11 2.5 11 5V6.8C8.6 7.4 8.6 9.8 11 10.4V11C11 13.5 9.5 15 7 15H5C2.5 15 1 13.5 1 11V10.4C3.4 9.8 3.4 7.4 1 6.8V5" fill="none" stroke="#2a2a2a" stroke-width="1.7"/><path d="M6 1.5V5.5" stroke="#2a2a2a" stroke-width="1.6"/></svg>
<svg style="left:1305.5px;top:681.5px;width:12px;height:16px" viewBox="0 0 12 16"><path d="M1 5C1 2.5 2.5 1 5 1H7C9.5 1 11 2.5 11 5V11C11 13.5 9.5 15 7 15H5C2.5 15 1 13.5 1 11V5" fill="none" stroke="#2a2a2a" stroke-width="1.7"/><path d="M6 1.5V5.5" stroke="#2a2a2a" stroke-width="1.6"/><path d="M1.2 8L6 11.3L10.8 8" fill="none" stroke="#2a2a2a" stroke-width="1.6"/></svg>
<svg style="left:1304px;top:707.5px;width:16px;height:16px" viewBox="0 0 16 16"><rect x="1" y="1" width="14" height="14" rx="2.5" fill="none" stroke="#333" stroke-width="1.8"/><path d="M1 10.7H15M8 10.7V15" stroke="#333" stroke-width="1.6"/></svg>
<svg style="left:1302px;top:732px;width:20px;height:20px" viewBox="0 0 20 20"><path d="M5 4.5C7 2.5 10 2.5 12.5 4" fill="none" stroke="#56708a" stroke-width="2.2" stroke-linecap="round"/><path d="M7.5 15.5C10 17 13 16.5 15 14.5" fill="none" stroke="#56708a" stroke-width="2.2" stroke-linecap="round"/><circle cx="15.3" cy="4.3" r="3.3" fill="#263238"/><circle cx="3.8" cy="15.4" r="3.3" fill="#263238"/></svg>
<svg style="left:1303px;top:759px;width:16px;height:20px" viewBox="0 0 16 20"><path d="M10.6 0.5L14 4L10.6 7.5L7.2 4Z" fill="#8a8a8a"/><path d="M4.9 5.8L8.3 9.3L4.9 12.8L1.5 9.3Z" fill="#555"/><path d="M10.6 11.5L14 15L10.6 18.5L7.2 15Z" fill="#2a2a2a"/></svg>

</body></html>
